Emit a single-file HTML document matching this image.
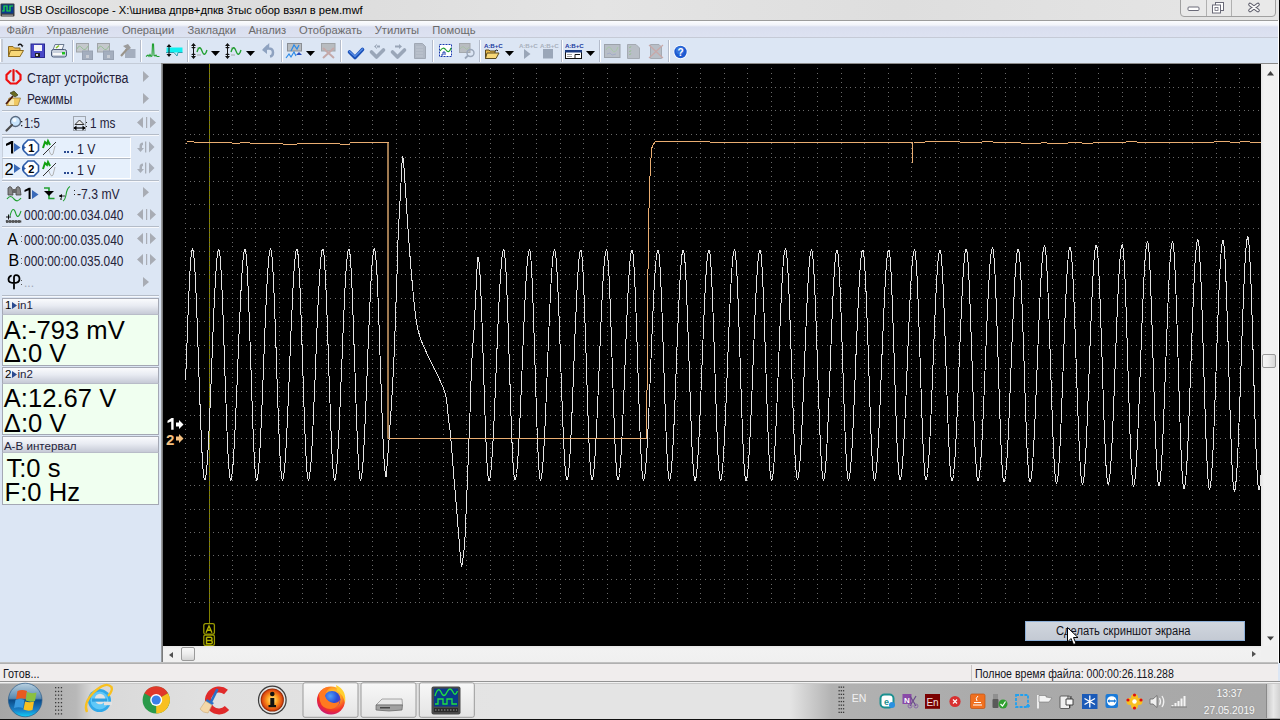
<!DOCTYPE html>
<html><head><meta charset="utf-8">
<style>
*{box-sizing:border-box}
body{margin:0;width:1280px;height:720px;overflow:hidden;position:relative;font-family:"Liberation Sans",sans-serif;background:#dce6f4;color:#000}
.a{position:absolute}
.t{position:absolute;white-space:pre;line-height:1}
svg{position:absolute;left:0;top:0;overflow:visible}
#grid line{stroke:#6a6a6a;stroke-width:1;stroke-dasharray:1 3.684;shape-rendering:crispEdges}
</style></head><body>
<div class="a" style="left:0px;top:0px;width:1280px;height:20px;background:linear-gradient(90deg,#e6e6e6,#dcdcdc 300px,#e4e4e4 600px,#dedede 900px,#e6e6e6);"></div>
<div class="a" style="left:0px;top:20px;width:1280px;height:1px;background:#9c9c9c;"></div>
<svg style="left:0px;top:3px;" width="15" height="15" viewBox="0 0 15 15"><rect x="0.5" y="0.5" width="14" height="13" rx="1" fill="#3a3a3a"/><rect x="1.5" y="1.5" width="12" height="9" fill="#0a3a8a"/><path d="M2,8 L4,8 L4,3 L7,3 L7,8 L10,8 L10,3 L13,3" fill="none" stroke="#20e040" stroke-width="1.2"/><rect x="2" y="11.5" width="11" height="1.5" fill="#888"/></svg>
<div class="t" style="left:19.4px;top:4.5px;font-size:11.2px;color:#000;">USB Oscilloscope - X:\шнива дпрв+дпкв 3тыс обор взял в рем.mwf</div>
<svg style="left:1180px;top:0px;" width="97" height="17" viewBox="0 0 97 17"><path d="M0.5,0 L0.5,13 Q0.5,16.5 4,16.5 L92,16.5 Q95.5,16.5 95.5,13 L95.5,0" fill="#e9e9e9" stroke="#a0a0a0"/><line x1="26.5" y1="0" x2="26.5" y2="16" stroke="#b0b0b0"/><line x1="51.5" y1="0" x2="51.5" y2="16" stroke="#b0b0b0"/><rect x="8" y="7" width="11" height="3.5" rx="1" fill="#fff" stroke="#6a6a78" stroke-width="1"/><rect x="35.5" y="2.5" width="8" height="8" fill="#fff" stroke="#6a6a78"/><rect x="32.5" y="5" width="8" height="8" fill="#fff" stroke="#6a6a78"/><rect x="35" y="7.5" width="3" height="3" fill="none" stroke="#6a6a78" stroke-width="0.8"/><path d="M70,4.5 L78,10.5 M78,4.5 L70,10.5" stroke="#5a5a68" stroke-width="3.6" stroke-linecap="round"/><path d="M70,4.5 L78,10.5 M78,4.5 L70,10.5" stroke="#f8f8f8" stroke-width="1.6" stroke-linecap="round"/></svg>
<div class="a" style="left:0px;top:21px;width:1278px;height:16px;background:linear-gradient(#fbfcfe 0px,#f2f4fa 4px,#d9deef 6px,#dde2f1 16px);"></div>
<div class="a" style="left:0px;top:37px;width:1278px;height:1px;background:#c5cad6;"></div>
<div class="t" style="left:6.6px;top:24.5px;font-size:11.2px;color:#6b6b6b;">Файл</div>
<div class="t" style="left:46.5px;top:24.5px;font-size:11.2px;color:#6b6b6b;">Управление</div>
<div class="t" style="left:121.9px;top:24.5px;font-size:11.2px;color:#6b6b6b;">Операции</div>
<div class="t" style="left:187.5px;top:24.5px;font-size:11.2px;color:#6b6b6b;">Закладки</div>
<div class="t" style="left:248.4px;top:24.5px;font-size:11.2px;color:#6b6b6b;">Анализ</div>
<div class="t" style="left:299.0px;top:24.5px;font-size:11.2px;color:#6b6b6b;">Отображать</div>
<div class="t" style="left:374.7px;top:24.5px;font-size:11.2px;color:#6b6b6b;">Утилиты</div>
<div class="t" style="left:432.3px;top:24.5px;font-size:11.2px;color:#6b6b6b;">Помощь</div>
<div class="a" style="left:0px;top:38px;width:1278px;height:26px;background:#dce6f4;"></div>
<div class="a" style="left:0px;top:39px;width:2px;height:23px;background:#c0c8d4;"></div>
<div class="a" style="left:72px;top:40px;width:1px;height:22px;background:#b4bccb;"></div>
<div class="a" style="left:73px;top:40px;width:1px;height:22px;background:#ffffff;"></div>
<div class="a" style="left:140px;top:40px;width:1px;height:22px;background:#b4bccb;"></div>
<div class="a" style="left:141px;top:40px;width:1px;height:22px;background:#ffffff;"></div>
<div class="a" style="left:187px;top:40px;width:1px;height:22px;background:#b4bccb;"></div>
<div class="a" style="left:188px;top:40px;width:1px;height:22px;background:#ffffff;"></div>
<div class="a" style="left:281px;top:40px;width:1px;height:22px;background:#b4bccb;"></div>
<div class="a" style="left:282px;top:40px;width:1px;height:22px;background:#ffffff;"></div>
<div class="a" style="left:340px;top:40px;width:1px;height:22px;background:#b4bccb;"></div>
<div class="a" style="left:341px;top:40px;width:1px;height:22px;background:#ffffff;"></div>
<div class="a" style="left:432px;top:40px;width:1px;height:22px;background:#b4bccb;"></div>
<div class="a" style="left:433px;top:40px;width:1px;height:22px;background:#ffffff;"></div>
<div class="a" style="left:479px;top:40px;width:1px;height:22px;background:#b4bccb;"></div>
<div class="a" style="left:480px;top:40px;width:1px;height:22px;background:#ffffff;"></div>
<div class="a" style="left:561px;top:40px;width:1px;height:22px;background:#b4bccb;"></div>
<div class="a" style="left:562px;top:40px;width:1px;height:22px;background:#ffffff;"></div>
<div class="a" style="left:599px;top:40px;width:1px;height:22px;background:#b4bccb;"></div>
<div class="a" style="left:600px;top:40px;width:1px;height:22px;background:#ffffff;"></div>
<div class="a" style="left:668px;top:40px;width:1px;height:22px;background:#b4bccb;"></div>
<div class="a" style="left:669px;top:40px;width:1px;height:22px;background:#ffffff;"></div>
<div class="a" style="left:0;top:39px;width:1px;height:23px;background:#fff"></div><div class="a" style="left:1px;top:39px;width:2px;height:23px;background:#c6ccd6"></div>
<svg style="left:8px;top:43px;" width="16" height="14" viewBox="0 0 16 14"><path d="M0.5,3.5 L5,3.5 L6.5,5 L12,5 L12,13.5 L0.5,13.5 Z" fill="#e8b848" stroke="#8a6a20"/><path d="M2.5,7.5 L15.5,7.5 L12,13.5 L0.5,13.5 Z" fill="#f8d878" stroke="#8a6a20"/><path d="M10,2.5 Q12,0 14,2.5" fill="none" stroke="#111" stroke-width="1.3"/><path d="M13,2 L15.5,2.5 L14,4.5Z" fill="#111"/></svg>
<svg style="left:31px;top:44px;" width="14" height="14" viewBox="0 0 14 14"><rect x="0" y="0" width="13.5" height="13.5" fill="#4848c8"/><rect x="0" y="0" width="13.5" height="13.5" fill="none" stroke="#2a2a90"/><rect x="3" y="1" width="8" height="6" fill="#f4f4f8"/><rect x="4" y="9" width="5" height="4" fill="#222"/><rect x="5" y="10" width="2" height="2" fill="#ddd"/></svg>
<svg style="left:51px;top:44px;" width="16" height="14" viewBox="0 0 16 14"><path d="M4,0.5 L13,0.5 L11,6 L2,6Z" fill="#f4f6f8" stroke="#6a7a90"/><path d="M5,4 L8,1.5" stroke="#80c020" stroke-width="1.5"/><rect x="0.5" y="5.5" width="15" height="7.5" rx="2" fill="#c8d0dc" stroke="#4a5a78"/><rect x="2" y="9" width="12" height="2" fill="#f8f8f8"/><rect x="11" y="8" width="3" height="2.5" fill="#20c020"/></svg>
<svg style="left:76px;top:43px;" width="17" height="17" viewBox="0 0 17 17"><rect x="0.5" y="0.5" width="12" height="8.5" fill="#c4c8cc" stroke="#a0a4a8"/><path d="M1,6 Q3,1 6,5 Q9,9 12,3" fill="none" stroke="#98c098"/><rect x="6.5" y="8" width="10" height="8.5" fill="#a4aebe" stroke="#98a2b2"/><rect x="10" y="12" width="3" height="3" fill="#c8ccd4"/></svg>
<svg style="left:97px;top:43px;" width="17" height="17" viewBox="0 0 17 17"><rect x="0.5" y="0.5" width="12" height="8.5" fill="#c4c8cc" stroke="#a0a4a8"/><path d="M1,6 Q3,1 6,5 Q9,9 12,3" fill="none" stroke="#98c098"/><rect x="6.5" y="8" width="10" height="8.5" fill="#a4aebe" stroke="#98a2b2"/><rect x="10" y="12" width="3" height="3" fill="#c8ccd4"/></svg>
<svg style="left:120px;top:44px;" width="16" height="14" viewBox="0 0 16 14"><rect x="5" y="5" width="10.5" height="9" fill="#a4aebe"/><path d="M1,12 L8,4" stroke="#9a948a" stroke-width="2"/><path d="M3,2 L8,0 L11,4 L8,6 Z" fill="#9c9c9c"/></svg>
<svg style="left:146px;top:44px;" width="14" height="13" viewBox="0 0 14 13"><path d="M0,12.5 L2,11 L3,12.5 L4,10.5 L5,12.5 L6,12 L6.5,0 L7.5,0 L8,11.5 L9,12 L10,11 L11,12.5 L13.5,12.5" fill="none" stroke="#20a030" stroke-width="1.1"/></svg>
<svg style="left:165px;top:44px;" width="18" height="13" viewBox="0 0 18 13"><rect x="1.5" y="3.5" width="16" height="5" fill="#10f0f0"/><path d="M1,8.5 L9,8.5 L12,12 L13,8.5 L17.5,8.5" fill="none" stroke="#30a0b0" stroke-width="1"/><path d="M4,0 L1.5,3 L6.5,3Z M4,13 L1.5,10 L6.5,10Z" fill="#111"/><rect x="3.5" y="2" width="1" height="9" fill="#111"/></svg>
<svg style="left:191px;top:43px;" width="17" height="16" viewBox="0 0 17 16"><path d="M2.5,0 L0,3 L5,3Z M2.5,16 L0,13 L5,13Z M2.5,6 L0,4 L5,4Z M2.5,10 L0,12 L5,12Z" fill="#111"/><rect x="2" y="2" width="1" height="12" fill="#111"/><path d="M6,5 L10,5 M6,12 L10,12" stroke="#999" stroke-width="0.8"/><path d="M6,9 Q8.5,1 11,8 Q13.5,15 16,7" fill="none" stroke="#20a030" stroke-width="1.3"/></svg>
<svg style="left:225px;top:43px;" width="17" height="16" viewBox="0 0 17 16"><path d="M2.5,0 L0,3 L5,3Z M2.5,16 L0,13 L5,13Z M2.5,6 L0,4 L5,4Z M2.5,10 L0,12 L5,12Z" fill="#111"/><rect x="2" y="2" width="1" height="12" fill="#111"/><path d="M6,5 L10,5 M6,12 L10,12" stroke="#999" stroke-width="0.8"/><path d="M6,9 Q8.5,1 11,8 Q13.5,15 16,7" fill="none" stroke="#20a030" stroke-width="1.3"/></svg>
<svg style="left:211px;top:51px;" width="9" height="5" viewBox="0 0 9 5"><path d="M0,0 L9,0 L4.5,5 Z" fill="#000"/></svg>
<svg style="left:246px;top:51px;" width="9" height="5" viewBox="0 0 9 5"><path d="M0,0 L9,0 L4.5,5 Z" fill="#000"/></svg>
<svg style="left:306px;top:51px;" width="9" height="5" viewBox="0 0 9 5"><path d="M0,0 L9,0 L4.5,5 Z" fill="#000"/></svg>
<svg style="left:504.5px;top:51px;" width="9" height="5" viewBox="0 0 9 5"><path d="M0,0 L9,0 L4.5,5 Z" fill="#000"/></svg>
<svg style="left:586px;top:51px;" width="9" height="5" viewBox="0 0 9 5"><path d="M0,0 L9,0 L4.5,5 Z" fill="#000"/></svg>
<svg style="left:262px;top:45px;" width="12" height="12" viewBox="0 0 12 12"><path d="M2,5 L6,1 L6,3.5 Q11,3 11,7.5 Q11,11 8,11.5" fill="none" stroke="#8ea2c0" stroke-width="2.5"/><path d="M0,5 L5,0 L5,9Z" fill="#8ea2c0"/></svg>
<svg style="left:286px;top:43px;" width="16" height="16" viewBox="0 0 16 16"><rect x="1.5" y="0.5" width="14" height="7.5" fill="#b8bcc0" stroke="#8a8e94"/><path d="M5,8 L8,2 L11,6 L13,2" fill="none" stroke="#2a8ae8" stroke-width="1.2"/><path d="M0,15 L3,11 L5,14 L8,9 L10,13" fill="none" stroke="#2a8ae8" stroke-width="1.2"/><path d="M10,12 L13,9 L16,12Z" fill="#2a50c0"/></svg>
<svg style="left:321px;top:43px;" width="15" height="16" viewBox="0 0 15 16"><rect x="0.5" y="0.5" width="13.5" height="7.5" fill="#b8bcc0" stroke="#a0a4a8"/><path d="M2,15 L13,5 M2,5 L13,15" stroke="#c4a8a8" stroke-width="2"/></svg>
<svg style="left:348px;top:47px;" width="16" height="12" viewBox="0 0 16 12"><path d="M1.5,5 L7,10.5 L14.5,2.5" fill="none" stroke="#1a50b8" stroke-width="3.6" stroke-linejoin="round" stroke-linecap="round"/><path d="M1.5,4.5 L7,9.5 L14.5,2" fill="none" stroke="#5a90e8" stroke-width="1.2" stroke-linecap="round"/></svg>
<svg style="left:370px;top:44px;" width="15" height="15" viewBox="0 0 15 15"><path d="M7,0 L4,2.5 L7,5 Z M6,1.5 L10,1.5 L10,3.5 L6,3.5Z" fill="#9aa6b8"/><path d="M1.5,8 L6.5,13 L13.5,6" fill="none" stroke="#9aa6b8" stroke-width="3.6" stroke-linejoin="round" stroke-linecap="round"/></svg>
<svg style="left:391px;top:44px;" width="15" height="15" viewBox="0 0 15 15"><path d="M8,0 L11,2.5 L8,5 Z M4,1.5 L9,1.5 L9,3.5 L4,3.5Z" fill="#9aa6b8"/><path d="M1.5,8 L6.5,13 L13.5,6" fill="none" stroke="#9aa6b8" stroke-width="3.6" stroke-linejoin="round" stroke-linecap="round"/></svg>
<svg style="left:414px;top:43px;" width="12" height="16" viewBox="0 0 12 16"><path d="M0.5,0.5 L8.5,0.5 L11.5,3.5 L11.5,15.5 L0.5,15.5Z" fill="#b0b8c4" stroke="#a0a8b4"/><path d="M2,4 L9,4 M2,7 L9,7 M2,10 L9,10 M2,13 L9,13" stroke="#c4cad4" stroke-width="0.8"/></svg>
<svg style="left:438px;top:43px;" width="15" height="15" viewBox="0 0 15 15"><rect x="1.5" y="1.5" width="12" height="12" fill="#fff" stroke="#1a3ab0" stroke-dasharray="2 1"/><path d="M2,8 Q5,3 8,7 Q11,11 13,5" fill="none" stroke="#20a030" stroke-width="1.2"/><path d="M3,12 L5,12 L5,9 L7,9 L7,12" fill="none" stroke="#1a3ab0" stroke-width="1"/></svg>
<svg style="left:459px;top:43px;" width="17" height="16" viewBox="0 0 17 16"><rect x="0.5" y="0.5" width="10.5" height="9" fill="#b8bcc0" stroke="#a4a8ac"/><path d="M1,6 Q4,2 6,5 Q8,8 10,4" fill="none" stroke="#a8c0a8"/><circle cx="11.5" cy="10" r="3.5" fill="none" stroke="#9aa6b8" stroke-width="1.4"/><path d="M9,12.5 L6,15.5" stroke="#9aa6b8" stroke-width="1.8"/></svg>
<div class="t" style="left:484px;top:42.5px;font-size:6.2px;font-weight:bold;color:#1a3aa0;letter-spacing:-0.1px">A:B+C</div>
<div class="t" style="left:519px;top:42.5px;font-size:6.2px;font-weight:bold;color:#a8b0bc;letter-spacing:-0.1px">A:B+C</div>
<div class="t" style="left:540px;top:42.5px;font-size:6.2px;font-weight:bold;color:#a8b0bc;letter-spacing:-0.1px">A:B+C</div>
<div class="t" style="left:565px;top:42.5px;font-size:6.2px;font-weight:bold;color:#1a3aa0;letter-spacing:-0.1px">A:B+C</div>
<svg style="left:485px;top:49px;" width="15" height="10" viewBox="0 0 15 10"><path d="M0.5,1 L4,1 L5,2 L10,2 L10,9.5 L0.5,9.5Z" fill="#e8b848" stroke="#5a4a20"/><path d="M2,4 L14,4 L11,9.5 L0.5,9.5Z" fill="#f8d878" stroke="#5a4a20"/><path d="M10,2 Q12,0 13,2" fill="none" stroke="#111"/></svg>
<svg style="left:524px;top:49px;" width="7" height="10" viewBox="0 0 7 10"><path d="M0,0 L6.5,5 L0,10Z" fill="#9aa6b8"/></svg>
<svg style="left:543px;top:49px;" width="10" height="10" viewBox="0 0 10 10"><rect width="10" height="9.5" fill="#9aa6b8"/></svg>
<svg style="left:565px;top:50px;" width="17" height="9" viewBox="0 0 17 9"><rect x="0.5" y="0.5" width="16" height="8" fill="#fff" stroke="#111"/><rect x="0" y="0" width="17" height="2.5" fill="#1a3a80"/><path d="M2,4.5 L7,4.5 M2,6.5 L7,6.5" stroke="#888" stroke-width="0.8"/><path d="M10,8 L10,4.5 L15,4.5" fill="none" stroke="#111"/></svg>
<svg style="left:604px;top:44px;" width="17" height="14" viewBox="0 0 17 14"><rect x="0.5" y="0.5" width="15.5" height="13" fill="#b8bec6" stroke="#9ca2aa"/><path d="M2,6 Q5,0 8,6 Q11,11 14,3" fill="none" stroke="#a8c8a8"/><path d="M3,10 L6,9 L8,11 L12,10" fill="none" stroke="#a0a8c8" stroke-width="0.8"/></svg>
<svg style="left:627px;top:44px;" width="13" height="15" viewBox="0 0 13 15"><path d="M0.5,0.5 L9,0.5 L12.5,4 L12.5,14.5 L0.5,14.5Z" fill="#b8bec6" stroke="#a4aab2"/><path d="M2,3 L3,4 L4,2 M2,7 L3,8 L4,6 M2,10 L3,11 L4,9" fill="none" stroke="#98c098" stroke-width="0.8"/></svg>
<svg style="left:648px;top:44px;" width="16" height="15" viewBox="0 0 16 15"><path d="M2.5,0.5 L11,0.5 L13.5,3 L13.5,14.5 L2.5,14.5Z" fill="#b8bec6" stroke="#a4aab2"/><path d="M1,1 L15,14 M15,1 L1,14" stroke="#c8a8a8" stroke-width="1.2"/></svg>
<svg style="left:673px;top:45px;" width="16" height="14" viewBox="0 0 16 14"><circle cx="7.5" cy="7" r="7" fill="#fff"/><circle cx="7.5" cy="7" r="6.2" fill="#1e5ad0"/><circle cx="7" cy="5.5" r="4" fill="#4a8ae8" opacity="0.5"/><text x="7.6" y="11" font-family="Liberation Sans" font-weight="bold" font-size="10" fill="#fff" text-anchor="middle">?</text></svg>
<div class="a" style="left:0px;top:64px;width:161px;height:598px;background:#dce6f4;"></div>
<div class="a" style="left:161px;top:64px;width:2px;height:598px;background:linear-gradient(90deg,#a8acb0,#6a6a6a);"></div>
<svg style="left:5px;top:69px;" width="17" height="16" viewBox="0 0 17 16"><path d="M5.5,2 L11.5,2 L15.5,6 L15.5,10.5 L11.5,14.5 L5.5,14.5 L1.5,10.5 L1.5,6 Z" fill="none" stroke="#f01010" stroke-width="2.2"/><rect x="6.5" y="0" width="4" height="4" fill="#dce6f4"/><path d="M8.5,1 L8.5,11.5" stroke="#e01010" stroke-width="2.2" stroke-linecap="round"/></svg>
<div class="t" style="left:27.0px;top:71.1px;font-size:14px;color:#24223a;transform:scaleX(0.8881);transform-origin:0 0;">Старт устройства</div>
<svg style="left:143px;top:71px;" width="6" height="11" viewBox="0 0 6 11"><path d="M0,0 L6,5.5 L0,11 Z" fill="#a8acb4"/></svg>
<svg style="left:5px;top:91px;" width="17" height="16" viewBox="0 0 17 16"><path d="M4,7 L15.5,7 L13,14.5 L1.5,14.5 Z" fill="#f0c860" stroke="#a08040" stroke-width="0.8"/><path d="M4,8 L9,8 L9,14 L4,14Z" fill="#f8e8b0"/><path d="M1,13 L8,5" stroke="#4a1a10" stroke-width="1.8"/><path d="M5,2 L9,0 L13,4 L10,6 Z" fill="#6a6a20" stroke="#2a2a10" stroke-width="0.6"/></svg>
<div class="t" style="left:27.0px;top:92.1px;font-size:14px;color:#24223a;transform:scaleX(0.8528);transform-origin:0 0;">Режимы</div>
<svg style="left:143px;top:93px;" width="6" height="11" viewBox="0 0 6 11"><path d="M0,0 L6,5.5 L0,11 Z" fill="#a8acb4"/></svg>
<div class="a" style="left:2px;top:110px;width:157px;height:1px;background:#b4bcc8;"></div><div class="a" style="left:2px;top:111px;width:157px;height:1px;background:#f6f8fc;"></div>
<svg style="left:5px;top:115px;" width="17" height="17" viewBox="0 0 17 17"><circle cx="10.5" cy="6.5" r="5" fill="#c8e4fc" stroke="#5a6a80" stroke-width="1.3"/><circle cx="9.5" cy="5" r="2" fill="#fff" opacity="0.8"/><path d="M7,10 L1.5,15.5" stroke="#4a4a4a" stroke-width="2.2" stroke-linecap="round"/><rect x="16" y="6" width="1.3" height="1.3" fill="#222"/><rect x="16" y="10" width="1.3" height="1.3" fill="#222"/></svg>
<div class="t" style="left:24.3px;top:115.9px;font-size:14px;color:#24223a;transform:scaleX(0.8167);transform-origin:0 0;">1:5</div>
<svg style="left:73px;top:116px;" width="13" height="15" viewBox="0 0 13 15"><rect x="0.5" y="0.5" width="12" height="14" fill="none" stroke="#333" stroke-width="0.7" stroke-dasharray="1 1"/><path d="M2,8.5 L6.5,4 L11,8.5 Z" fill="#e8e8e8" stroke="#333"/><path d="M1,12 L12,12" stroke="#000" stroke-width="1.2"/><path d="M0.5,12 L3.5,9.5 L3.5,14.5Z M12.5,12 L9.5,9.5 L9.5,14.5Z" fill="#000"/></svg>
<div class="a" style="left:86px;top:122px;width:1.4px;height:1.4px;background:#222;"></div>
<div class="a" style="left:86px;top:126px;width:1.4px;height:1.4px;background:#222;"></div>
<div class="t" style="left:90.0px;top:115.9px;font-size:14px;color:#24223a;transform:scaleX(0.8404);transform-origin:0 0;">1 ms</div>
<svg style="left:137px;top:117px;" width="19" height="11" viewBox="0 0 19 11"><path d="M6,0 L0,5.5 L6,11 Z M13,0 L19,5.5 L13,11 Z" fill="#a8acb4"/><rect x="9" y="0" width="1.2" height="11" fill="#a8acb4"/></svg>
<div class="a" style="left:2px;top:134px;width:157px;height:1px;background:#b4bcc8;"></div><div class="a" style="left:2px;top:135px;width:157px;height:1px;background:#f6f8fc;"></div>
<div class="a" style="left:2px;top:137px;width:129px;height:21px;background:#e6f0fc;border-top:1px solid #b0b8c4;border-left:1px solid #c8d0dc;border-right:1px solid #fff;border-bottom:1px solid #fff"></div>
<svg style="left:4px;top:140px;" width="10" height="14" viewBox="0 0 10 14"><path d="M2,3.8 L7.3,1 L9.2,1 L9.2,13.5 L7,13.5 L7,4 L2,6Z" fill="#000"/></svg>
<svg style="left:14px;top:143px;" width="7" height="9" viewBox="0 0 7 9"><path d="M0,0 L6.5,4.5 L0,9 Z" fill="#3a6ab8"/></svg>
<svg style="left:22px;top:139px;" width="18" height="17" viewBox="0 0 18 17"><path d="M6,1 L12,1 L16.5,5.5 L16.5,11.5 L12,16 L6,16 L1.5,11.5 L1.5,5.5 Z" fill="#fff" stroke="#2a5aa8" stroke-width="1.6"/><path d="M0,6 L4,8.5 L0,11Z" fill="#2a5aa8"/><text x="9.3" y="13" font-family="Liberation Sans" font-weight="bold" font-size="11" text-anchor="middle" fill="#000">1</text></svg>
<svg style="left:42px;top:140px;" width="15" height="16" viewBox="0 0 15 16"><path d="M1,8 L3,2 L5,4 L6,1 L8,5" fill="none" stroke="#10a010" stroke-width="2"/><path d="M1,15 L14,2" stroke="#333" stroke-width="1"/><path d="M7,10 Q9,17 11,14 L13,6" fill="none" stroke="#aaa" stroke-width="0.9"/></svg>
<div class="a" style="left:63.5px;top:151px;width:2px;height:2px;background:#2a4a90;"></div>
<div class="a" style="left:67.2px;top:151px;width:2px;height:2px;background:#2a4a90;"></div>
<div class="a" style="left:70.9px;top:151px;width:2px;height:2px;background:#2a4a90;"></div>
<div class="t" style="left:77.3px;top:140.6px;font-size:15px;color:#24223a;transform:scaleX(0.8172);transform-origin:0 0;">1 V</div>
<svg style="left:137px;top:141px;" width="19" height="12" viewBox="0 0 19 12"><path d="M6,1.5 Q2.5,1.5 2.5,5 L2.5,7 L0,7 L3.5,11 L7,7 L5,7 L5,5 Q5,4 6,4Z" fill="#a8aeb8"/><rect x="8" y="0.5" width="1.3" height="11" fill="#a8aeb8"/><path d="M12,0.5 L17.5,6 L12,11.5Z" fill="#a8aeb8"/></svg>
<div class="a" style="left:2px;top:158px;width:129px;height:21px;background:#e6f0fc;border-top:1px solid #b0b8c4;border-left:1px solid #c8d0dc;border-right:1px solid #fff;border-bottom:1px solid #fff"></div>
<div class="t" style="left:4.5px;top:160.9px;font-size:16.5px;color:#000;">2</div>
<svg style="left:14px;top:164px;" width="7" height="9" viewBox="0 0 7 9"><path d="M0,0 L6.5,4.5 L0,9 Z" fill="#3a6ab8"/></svg>
<svg style="left:22px;top:160px;" width="18" height="17" viewBox="0 0 18 17"><path d="M6,1 L12,1 L16.5,5.5 L16.5,11.5 L12,16 L6,16 L1.5,11.5 L1.5,5.5 Z" fill="#fff" stroke="#2a5aa8" stroke-width="1.6"/><path d="M0,6 L4,8.5 L0,11Z" fill="#2a5aa8"/><text x="9.3" y="13" font-family="Liberation Sans" font-weight="bold" font-size="11" text-anchor="middle" fill="#000">2</text></svg>
<svg style="left:42px;top:161px;" width="15" height="16" viewBox="0 0 15 16"><path d="M1,8 L3,2 L5,4 L6,1 L8,5" fill="none" stroke="#10a010" stroke-width="2"/><path d="M1,15 L14,2" stroke="#333" stroke-width="1"/><path d="M7,10 Q9,17 11,14 L13,6" fill="none" stroke="#aaa" stroke-width="0.9"/></svg>
<div class="a" style="left:63.5px;top:172px;width:2px;height:2px;background:#2a4a90;"></div>
<div class="a" style="left:67.2px;top:172px;width:2px;height:2px;background:#2a4a90;"></div>
<div class="a" style="left:70.9px;top:172px;width:2px;height:2px;background:#2a4a90;"></div>
<div class="t" style="left:77.3px;top:161.6px;font-size:15px;color:#24223a;transform:scaleX(0.8172);transform-origin:0 0;">1 V</div>
<svg style="left:137px;top:162px;" width="19" height="12" viewBox="0 0 19 12"><path d="M6,1.5 Q2.5,1.5 2.5,5 L2.5,7 L0,7 L3.5,11 L7,7 L5,7 L5,5 Q5,4 6,4Z" fill="#a8aeb8"/><rect x="8" y="0.5" width="1.3" height="11" fill="#a8aeb8"/><path d="M12,0.5 L17.5,6 L12,11.5Z" fill="#a8aeb8"/></svg>
<div class="a" style="left:2px;top:180px;width:157px;height:1px;background:#b4bcc8;"></div><div class="a" style="left:2px;top:181px;width:157px;height:1px;background:#f6f8fc;"></div>
<svg style="left:7px;top:185px;" width="15" height="17" viewBox="0 0 15 17"><path d="M1,3 Q3,0 5,3 L6,10 L1,10 Z M9,3 Q11,0 13,3 L14,10 L9,10 Z" fill="#888" stroke="#444" stroke-width="0.8"/><rect x="5.5" y="4" width="4" height="4" fill="#666"/><path d="M0,14 Q3.5,9 7,14 Q10.5,18 14,13" fill="none" stroke="#20a030" stroke-width="1.2"/></svg>
<svg style="left:23px;top:187px;" width="9" height="13" viewBox="0 0 9 13"><path d="M1.5,3 L5.8,0.8 L7.6,0.8 L7.6,12 L5.6,12 L5.6,3.3 L1.5,5Z" fill="#000"/></svg>
<svg style="left:32px;top:190px;" width="7" height="9" viewBox="0 0 7 9"><path d="M0,0 L6.5,4.5 L0,9 Z" fill="#3a6ab8"/></svg>
<svg style="left:44px;top:187px;" width="11" height="13" viewBox="0 0 11 13"><path d="M0,1 L5,1 L5,11.5 L10.5,11.5" fill="none" stroke="#20a030" stroke-width="1.6"/><path d="M0,4 L10,4 L5,9Z" fill="#000"/></svg>
<svg style="left:59px;top:186px;" width="15" height="16" viewBox="0 0 15 16"><path d="M4,15 Q6,14 7,9 Q8,2 11,0.5" fill="none" stroke="#20a030" stroke-width="1.1"/><path d="M0,10 L6,10" stroke="#000" stroke-width="0.8"/><path d="M0,10 L3,8 L3,12Z" fill="#000"/><rect x="1.5" y="12" width="1" height="2" fill="#000"/></svg>
<div class="a" style="left:73.5px;top:190px;width:1.3px;height:1.3px;background:#222;"></div>
<div class="a" style="left:73.5px;top:194px;width:1.3px;height:1.3px;background:#222;"></div>
<div class="t" style="left:77.0px;top:187.0px;font-size:14px;color:#24223a;transform:scaleX(0.8712);transform-origin:0 0;">-7.3 mV</div>
<svg style="left:143px;top:187.2px;" width="6" height="10.5" viewBox="0 0 6 10.5"><path d="M0,0 L6,5.25 L0,10.5 Z" fill="#a8acb4"/></svg>
<svg style="left:5px;top:207px;" width="17" height="16" viewBox="0 0 17 16"><path d="M5,9 Q8,-3 11,7 Q13,13 16,4" fill="none" stroke="#20a030" stroke-width="1.1"/><path d="M1,10 L6,10 M3.5,7.5 L3.5,12.5" stroke="#000" stroke-width="0.9"/><rect x="1" y="13.5" width="15" height="2" fill="#555" stroke="#222" stroke-width="0.5" stroke-dasharray="2 1"/></svg>
<div class="t" style="left:23.6px;top:208.4px;font-size:14px;color:#24223a;transform:scaleX(0.8520);transform-origin:0 0;">000:00:00.034.040</div>
<svg style="left:137px;top:208.5px;" width="19" height="11" viewBox="0 0 19 11"><path d="M6,0 L0,5.5 L6,11 Z M13,0 L19,5.5 L13,11 Z" fill="#a8acb4"/><rect x="9" y="0" width="1.2" height="11" fill="#a8acb4"/></svg>
<div class="a" style="left:2px;top:226px;width:157px;height:1px;background:#b4bcc8;"></div><div class="a" style="left:2px;top:227px;width:157px;height:1px;background:#f6f8fc;"></div>
<div class="t" style="left:7.3px;top:231.5px;font-size:16px;color:#000;">A</div>
<div class="a" style="left:20.5px;top:236px;width:1.3px;height:1.3px;background:#555;"></div>
<div class="a" style="left:20.5px;top:241px;width:1.3px;height:1.3px;background:#555;"></div>
<div class="t" style="left:23.6px;top:233.2px;font-size:14px;color:#24223a;transform:scaleX(0.8520);transform-origin:0 0;">000:00:00.035.040</div>
<svg style="left:137px;top:233px;" width="19" height="11" viewBox="0 0 19 11"><path d="M6,0 L0,5.5 L6,11 Z M13,0 L19,5.5 L13,11 Z" fill="#a8acb4"/><rect x="9" y="0" width="1.2" height="11" fill="#a8acb4"/></svg>
<div class="t" style="left:8.5px;top:253.2px;font-size:16px;color:#000;">B</div>
<div class="a" style="left:20.5px;top:257.5px;width:1.3px;height:1.3px;background:#555;"></div>
<div class="a" style="left:20.5px;top:262.5px;width:1.3px;height:1.3px;background:#555;"></div>
<div class="t" style="left:23.6px;top:253.9px;font-size:14px;color:#24223a;transform:scaleX(0.8520);transform-origin:0 0;">000:00:00.035.040</div>
<svg style="left:137px;top:254.3px;" width="19" height="11" viewBox="0 0 19 11"><path d="M6,0 L0,5.5 L6,11 Z M13,0 L19,5.5 L13,11 Z" fill="#a8acb4"/><rect x="9" y="0" width="1.2" height="11" fill="#a8acb4"/></svg>
<svg style="left:7px;top:274px;" width="14" height="16" viewBox="0 0 14 16"><path d="M4,1.8 Q1.5,3 1.5,5.5 Q1.5,9 7,9 Q12.5,9 12.5,5 Q12.5,1.2 9,1.2 Q7,1.2 7,3.5 L7,14.5" fill="none" stroke="#000" stroke-width="1.8" stroke-linecap="round"/></svg>
<div class="a" style="left:20.5px;top:279.5px;width:1.3px;height:1.3px;background:#555;"></div>
<div class="a" style="left:20.5px;top:283.5px;width:1.3px;height:1.3px;background:#555;"></div>
<div class="t" style="left:24.0px;top:277.2px;font-size:12px;color:#a0a8b8;">...</div>
<svg style="left:143px;top:276.8px;" width="6" height="10" viewBox="0 0 6 10"><path d="M0,0 L6,5.0 L0,10 Z" fill="#a8acb4"/></svg>
<div class="a" style="left:2px;top:295px;width:157px;height:1px;background:#b4bcc8;"></div><div class="a" style="left:2px;top:296px;width:157px;height:1px;background:#f6f8fc;"></div>
<div class="a" style="left:2px;top:298px;width:157px;height:16px;background:linear-gradient(#fafbfd,#e8ebf2 45%,#c6cad6);border:1px solid #a4a8b4;border-bottom:none"></div>
<div class="t" style="left:5.0px;top:300.3px;font-size:11.5px;color:#000;">1</div>
<svg style="left:12px;top:301.8px;" width="5" height="7" viewBox="0 0 5 7"><path d="M0,0 L5,3.5 L0,7Z" fill="#2a4a90"/></svg>
<div class="t" style="left:17.5px;top:300.3px;font-size:11.5px;color:#24223a;">in1</div>
<div class="a" style="left:2px;top:314px;width:157px;height:52px;background:#f0fff0;border:1px solid #a4a8b4;border-top:1px solid #b8bcc8"></div>
<div class="t" style="left:3.8px;top:317.7px;font-size:25.6px;color:#000;">A:-793 mV</div>
<div class="t" style="left:3.8px;top:341.1px;font-size:25.6px;color:#000;">Δ:0 V</div>
<div class="a" style="left:2px;top:367px;width:157px;height:16px;background:linear-gradient(#fafbfd,#e8ebf2 45%,#c6cad6);border:1px solid #a4a8b4;border-bottom:none"></div>
<div class="t" style="left:5.0px;top:369.3px;font-size:11.5px;color:#000;">2</div>
<svg style="left:12px;top:370.8px;" width="5" height="7" viewBox="0 0 5 7"><path d="M0,0 L5,3.5 L0,7Z" fill="#2a4a90"/></svg>
<div class="t" style="left:17.5px;top:369.3px;font-size:11.5px;color:#24223a;">in2</div>
<div class="a" style="left:2px;top:383px;width:157px;height:52px;background:#f0fff0;border:1px solid #a4a8b4;border-top:1px solid #b8bcc8"></div>
<div class="t" style="left:3.8px;top:386.2px;font-size:25.6px;color:#000;">A:12.67 V</div>
<div class="t" style="left:3.8px;top:411.2px;font-size:25.6px;color:#000;">Δ:0 V</div>
<div class="a" style="left:2px;top:436px;width:157px;height:16px;background:linear-gradient(#fafbfd,#e8ebf2 45%,#c6cad6);border:1px solid #a4a8b4;border-bottom:none"></div>
<div class="t" style="left:3.9px;top:439.8px;font-size:11.6px;color:#24223a;">A-B интервал</div>
<div class="a" style="left:2px;top:452px;width:157px;height:53px;background:#f0fff0;border:1px solid #a4a8b4;border-top:1px solid #b8bcc8"></div>
<div class="t" style="left:6.4px;top:455.7px;font-size:25.6px;color:#000;">T:0 s</div>
<div class="t" style="left:4.6px;top:480.2px;font-size:25.6px;color:#000;">F:0 Hz</div>
<div class="a" style="left:163px;top:64px;width:1098px;height:582px;background:#000;"></div>
<div class="a" style="left:161px;top:63px;width:1117px;height:1px;background:#8a8a8a;"></div>
<div class="a" style="left:0px;top:63px;width:161px;height:1px;background:#c4ccd8;"></div>
<svg width="1280" height="720" viewBox="0 0 1280 720">
<defs><clipPath id="sc"><rect x="163" y="64" width="1098" height="582"/></clipPath></defs>
<g clip-path="url(#sc)">
<line x1="209.5" y1="64" x2="209.5" y2="623.5" stroke="#808000" stroke-width="1"/>
<g id="grid"><line x1="185.50" y1="68.26" x2="185.50" y2="603.74"/><line x1="209.50" y1="68.26" x2="209.50" y2="603.74"/><line x1="232.50" y1="68.26" x2="232.50" y2="603.74"/><line x1="255.50" y1="68.26" x2="255.50" y2="603.74"/><line x1="279.50" y1="68.26" x2="279.50" y2="603.74"/><line x1="302.50" y1="68.26" x2="302.50" y2="603.74"/><line x1="326.50" y1="68.26" x2="326.50" y2="603.74"/><line x1="349.50" y1="68.26" x2="349.50" y2="603.74"/><line x1="372.50" y1="68.26" x2="372.50" y2="603.74"/><line x1="396.50" y1="68.26" x2="396.50" y2="603.74"/><line x1="419.50" y1="68.26" x2="419.50" y2="603.74"/><line x1="443.50" y1="68.26" x2="443.50" y2="603.74"/><line x1="466.50" y1="68.26" x2="466.50" y2="603.74"/><line x1="490.50" y1="68.26" x2="490.50" y2="603.74"/><line x1="513.50" y1="68.26" x2="513.50" y2="603.74"/><line x1="536.50" y1="68.26" x2="536.50" y2="603.74"/><line x1="560.50" y1="68.26" x2="560.50" y2="603.74"/><line x1="583.50" y1="68.26" x2="583.50" y2="603.74"/><line x1="607.50" y1="68.26" x2="607.50" y2="603.74"/><line x1="630.50" y1="68.26" x2="630.50" y2="603.74"/><line x1="654.50" y1="68.26" x2="654.50" y2="603.74"/><line x1="677.50" y1="68.26" x2="677.50" y2="603.74"/><line x1="700.50" y1="68.26" x2="700.50" y2="603.74"/><line x1="724.50" y1="68.26" x2="724.50" y2="603.74"/><line x1="747.50" y1="68.26" x2="747.50" y2="603.74"/><line x1="771.50" y1="68.26" x2="771.50" y2="603.74"/><line x1="794.50" y1="68.26" x2="794.50" y2="603.74"/><line x1="817.50" y1="68.26" x2="817.50" y2="603.74"/><line x1="841.50" y1="68.26" x2="841.50" y2="603.74"/><line x1="864.50" y1="68.26" x2="864.50" y2="603.74"/><line x1="888.50" y1="68.26" x2="888.50" y2="603.74"/><line x1="911.50" y1="68.26" x2="911.50" y2="603.74"/><line x1="935.50" y1="68.26" x2="935.50" y2="603.74"/><line x1="958.50" y1="68.26" x2="958.50" y2="603.74"/><line x1="981.50" y1="68.26" x2="981.50" y2="603.74"/><line x1="1005.50" y1="68.26" x2="1005.50" y2="603.74"/><line x1="1028.50" y1="68.26" x2="1028.50" y2="603.74"/><line x1="1052.50" y1="68.26" x2="1052.50" y2="603.74"/><line x1="1075.50" y1="68.26" x2="1075.50" y2="603.74"/><line x1="1098.50" y1="68.26" x2="1098.50" y2="603.74"/><line x1="1122.50" y1="68.26" x2="1122.50" y2="603.74"/><line x1="1145.50" y1="68.26" x2="1145.50" y2="603.74"/><line x1="1169.50" y1="68.26" x2="1169.50" y2="603.74"/><line x1="1192.50" y1="68.26" x2="1192.50" y2="603.74"/><line x1="1216.50" y1="68.26" x2="1216.50" y2="603.74"/><line x1="1239.50" y1="68.26" x2="1239.50" y2="603.74"/><line x1="185.10" y1="87.50" x2="1261" y2="87.50"/><line x1="185.10" y1="110.50" x2="1261" y2="110.50"/><line x1="185.10" y1="134.50" x2="1261" y2="134.50"/><line x1="185.10" y1="157.50" x2="1261" y2="157.50"/><line x1="185.10" y1="181.50" x2="1261" y2="181.50"/><line x1="185.10" y1="204.50" x2="1261" y2="204.50"/><line x1="185.10" y1="228.50" x2="1261" y2="228.50"/><line x1="185.10" y1="251.50" x2="1261" y2="251.50"/><line x1="185.10" y1="274.50" x2="1261" y2="274.50"/><line x1="185.10" y1="298.50" x2="1261" y2="298.50"/><line x1="185.10" y1="321.50" x2="1261" y2="321.50"/><line x1="185.10" y1="345.50" x2="1261" y2="345.50"/><line x1="185.10" y1="368.50" x2="1261" y2="368.50"/><line x1="185.10" y1="391.50" x2="1261" y2="391.50"/><line x1="185.10" y1="415.50" x2="1261" y2="415.50"/><line x1="185.10" y1="438.50" x2="1261" y2="438.50"/><line x1="185.10" y1="462.50" x2="1261" y2="462.50"/><line x1="185.10" y1="485.50" x2="1261" y2="485.50"/><line x1="185.10" y1="509.50" x2="1261" y2="509.50"/><line x1="185.10" y1="532.50" x2="1261" y2="532.50"/><line x1="185.10" y1="555.50" x2="1261" y2="555.50"/><line x1="185.10" y1="579.50" x2="1261" y2="579.50"/><line x1="185.10" y1="602.50" x2="1261" y2="602.50"/></g>
<path d="M185.6,380.0 185.9,371.9 186.5,357.5 187.0,343.1 187.5,329.1 188.0,315.6 188.5,302.9 189.0,291.2 189.5,280.6 190.0,271.4 190.5,263.7 191.0,257.5 191.5,253.0 192.0,250.3 192.5,249.4 193.0,250.4 193.5,253.3 194.0,258.2 194.5,264.8 195.1,273.2 195.6,283.2 196.1,294.5 196.6,307.0 197.1,320.6 197.6,334.9 198.1,349.7 198.6,364.7 199.1,379.7 199.6,394.5 200.2,408.8 200.7,422.3 201.2,434.9 201.7,446.2 202.2,456.2 202.7,464.6 203.2,471.2 203.7,476.1 204.2,479.0 204.8,480.0 205.2,479.3 205.8,477.1 206.2,473.5 206.8,468.6 207.2,462.3 207.8,454.8 208.2,446.2 208.8,436.6 209.2,426.0 209.8,414.7 210.2,402.8 210.8,390.4 211.2,377.6 211.8,364.7 212.2,351.8 212.8,339.0 213.2,326.6 213.8,314.7 214.2,303.4 214.8,292.8 215.2,283.2 215.8,274.6 216.2,267.1 216.8,260.8 217.2,255.9 217.8,252.3 218.2,250.1 218.8,249.4 219.3,250.5 219.8,253.7 220.3,258.9 220.8,266.2 221.3,275.3 221.8,286.0 222.4,298.2 222.9,311.7 223.4,326.1 223.9,341.2 224.4,356.8 224.9,372.6 225.4,388.2 226.0,403.3 226.5,417.7 227.0,431.2 227.5,443.4 228.0,454.1 228.5,463.2 229.1,470.5 229.6,475.7 230.1,478.9 230.6,480.0 231.1,479.3 231.6,477.1 232.1,473.5 232.7,468.6 233.2,462.3 233.7,454.8 234.2,446.2 234.7,436.6 235.2,426.0 235.7,414.7 236.3,402.8 236.8,390.4 237.3,377.6 237.8,364.7 238.3,351.8 238.8,339.0 239.3,326.6 239.9,314.7 240.4,303.4 240.9,292.8 241.4,283.2 241.9,274.6 242.4,267.1 242.9,260.8 243.5,255.9 244.0,252.3 244.5,250.1 245.0,249.4 245.5,250.5 246.0,253.7 246.5,258.9 247.0,266.2 247.5,275.3 248.0,286.0 248.5,298.2 249.0,311.7 249.5,326.1 250.0,341.2 250.5,356.8 251.1,372.6 251.6,388.2 252.1,403.3 252.6,417.7 253.1,431.2 253.6,443.4 254.1,454.1 254.6,463.2 255.1,470.5 255.6,475.7 256.1,478.9 256.6,480.0 257.1,479.3 257.6,477.1 258.1,473.5 258.6,468.6 259.1,462.3 259.6,454.8 260.1,446.2 260.6,436.5 261.1,425.9 261.6,414.6 262.1,402.6 262.6,390.2 263.1,377.4 263.6,364.5 264.1,351.6 264.6,338.8 265.1,326.4 265.6,314.4 266.1,303.1 266.6,292.5 267.1,282.8 267.6,274.2 268.1,266.7 268.6,260.4 269.1,255.5 269.6,251.9 270.1,249.7 270.6,249.0 271.1,250.1 271.6,253.3 272.2,258.6 272.7,265.8 273.2,274.9 273.7,285.7 274.2,297.9 274.7,311.4 275.3,325.8 275.8,341.0 276.3,356.6 276.8,372.4 277.3,388.0 277.8,403.2 278.4,417.6 278.9,431.1 279.4,443.3 279.9,454.1 280.4,463.2 280.9,470.4 281.5,475.7 282.0,478.9 282.5,480.0 283.0,479.3 283.5,477.1 284.0,473.5 284.6,468.6 285.1,462.3 285.6,454.8 286.1,446.2 286.6,436.5 287.1,425.9 287.6,414.6 288.2,402.6 288.7,390.2 289.2,377.4 289.7,364.5 290.2,351.6 290.7,338.8 291.2,326.4 291.8,314.4 292.3,303.1 292.8,292.5 293.3,282.8 293.8,274.2 294.3,266.7 294.8,260.4 295.4,255.5 295.9,251.9 296.4,249.7 296.9,249.0 297.4,250.1 297.9,253.3 298.4,258.6 298.9,265.8 299.4,274.9 299.9,285.7 300.4,297.9 300.9,311.4 301.4,325.8 301.9,341.0 302.4,356.6 302.9,372.4 303.4,388.0 303.9,403.2 304.4,417.6 304.9,431.1 305.4,443.3 305.9,454.1 306.4,463.2 306.9,470.4 307.4,475.7 307.9,478.9 308.4,480.0 308.9,479.3 309.4,477.1 309.9,473.5 310.4,468.6 311.0,462.3 311.5,454.8 312.0,446.2 312.5,436.5 313.0,425.9 313.5,414.6 314.0,402.6 314.6,390.2 315.1,377.4 315.6,364.5 316.1,351.6 316.6,338.8 317.1,326.4 317.6,314.4 318.1,303.1 318.6,292.5 319.2,282.8 319.7,274.2 320.2,266.7 320.7,260.4 321.2,255.5 321.7,251.9 322.2,249.7 322.8,249.0 323.3,250.1 323.8,253.3 324.3,258.6 324.8,265.8 325.3,274.9 325.8,285.7 326.4,297.9 326.9,311.4 327.4,325.8 327.9,341.0 328.4,356.6 328.9,372.4 329.4,388.0 330.0,403.2 330.5,417.6 331.0,431.1 331.5,443.3 332.0,454.1 332.5,463.2 333.1,470.4 333.6,475.7 334.1,478.9 334.6,480.0 335.1,479.3 335.6,477.1 336.1,473.5 336.6,468.6 337.2,462.3 337.7,454.8 338.2,446.2 338.7,436.5 339.2,425.9 339.7,414.6 340.2,402.6 340.7,390.2 341.2,377.4 341.8,364.5 342.3,351.6 342.8,338.8 343.3,326.4 343.8,314.4 344.3,303.1 344.8,292.5 345.3,282.8 345.8,274.2 346.3,266.7 346.9,260.4 347.4,255.5 347.9,251.9 348.4,249.7 348.9,249.0 349.4,250.1 349.9,253.3 350.4,258.6 350.9,265.8 351.4,274.9 351.9,285.7 352.4,297.9 352.9,311.4 353.4,325.8 353.9,341.0 354.4,356.6 355.0,372.4 355.5,388.0 356.0,403.2 356.5,417.6 357.0,431.1 357.5,443.3 358.0,454.1 358.5,463.2 359.0,470.4 359.5,475.7 360.0,478.9 360.5,480.0 361.0,479.2 361.5,476.9 362.0,473.0 362.6,467.7 363.1,461.0 363.6,453.0 364.1,443.8 364.6,433.5 365.1,422.2 365.6,410.2 366.2,397.6 366.7,384.6 367.2,371.2 367.7,357.8 368.2,344.4 368.7,331.4 369.3,318.8 369.8,306.8 370.3,295.5 370.8,285.2 371.3,276.0 371.8,268.0 372.3,261.3 372.9,256.0 373.4,252.1 373.9,249.8 374.4,249.0 374.9,250.1 375.4,253.2 375.9,258.4 376.5,265.6 377.0,274.6 377.5,285.2 378.0,297.3 378.5,310.6 379.0,324.8 379.5,339.8 380.0,355.2 380.6,370.8 381.1,386.2 381.6,401.2 382.1,415.4 382.6,428.7 383.1,440.8 383.6,451.4 384.1,460.4 384.7,467.6 385.2,472.8 385.7,475.9 386.2,477.0 386.9,467.9 387.9,454.7 389.0,440.0 390.1,423.9 391.3,406.4 392.3,390.0 393.0,376.9 393.7,365.0 394.3,350.0 395.1,329.0 395.9,305.1 396.7,283.0 397.3,265.1 397.7,249.0 398.3,233.0 399.2,215.4 400.2,197.7 401.0,183.0 401.5,172.1 401.9,164.0 402.3,159.0 402.7,157.3 403.1,158.7 403.5,162.0 403.9,166.6 404.4,173.2 405.0,183.0 406.0,197.7 407.1,215.7 408.3,233.0 409.4,248.3 410.5,262.9 411.7,277.0 413.0,291.4 414.3,305.3 415.7,317.0 417.0,325.3 418.4,331.4 420.0,337.0 422.0,342.6 424.3,347.7 426.7,353.0 429.3,358.6 432.2,364.2 435.0,370.0 438.0,376.1 440.9,382.4 443.3,388.0 444.8,392.1 445.7,395.6 446.5,400.0 447.3,406.2 447.9,413.3 448.6,420.0 449.3,425.3 450.0,430.3 450.7,437.0 451.5,446.6 452.4,457.9 453.3,470.0 454.4,483.1 455.6,496.9 456.7,510.0 457.6,521.9 458.5,533.0 459.3,543.0 460.1,552.7 460.8,561.2 461.5,566.0 462.1,565.1 462.7,560.4 463.3,555.0 463.8,551.2 464.4,546.7 465.0,537.0 465.8,518.9 466.8,495.7 467.7,473.0 468.5,452.3 469.3,432.1 470.0,413.0 470.6,395.0 471.1,378.0 471.7,363.0 472.4,351.0 473.2,340.9 474.0,330.0 474.7,316.6 475.4,302.5 476.0,290.0 476.5,279.9 476.9,271.5 477.2,265.0 477.5,260.8 477.8,258.4 478.0,257.0 478.5,258.1 479.0,261.5 479.5,267.1 480.0,274.7 480.5,284.3 481.0,295.6 481.5,308.4 482.0,322.4 482.5,337.3 483.0,352.9 483.5,368.8 484.0,384.7 484.5,400.3 485.0,415.2 485.5,429.2 486.0,442.0 486.5,453.3 487.0,462.9 487.5,470.5 488.0,476.1 488.5,479.5 489.0,480.6 489.5,479.9 490.0,477.9 490.5,474.6 491.0,469.9 491.5,464.1 492.0,457.1 492.5,449.0 493.1,439.9 493.6,429.9 494.1,419.2 494.6,407.9 495.1,396.0 495.6,383.8 496.1,371.4 496.6,358.9 497.1,346.5 497.6,334.3 498.1,322.4 498.6,311.1 499.1,300.4 499.6,290.4 500.2,281.3 500.7,273.2 501.2,266.2 501.7,260.4 502.2,255.7 502.7,252.4 503.2,250.4 503.7,249.7 504.2,250.9 504.7,254.4 505.2,260.1 505.8,267.9 506.3,277.8 506.8,289.4 507.3,302.5 507.8,316.9 508.3,332.2 508.8,348.2 509.4,364.6 509.9,381.0 510.4,397.0 510.9,412.3 511.4,426.7 511.9,439.8 512.4,451.4 512.9,461.3 513.5,469.1 514.0,474.8 514.5,478.3 515.0,479.5 515.5,478.8 516.0,476.8 516.5,473.5 517.0,468.9 517.5,463.1 518.0,456.1 518.5,448.1 519.0,439.0 519.5,429.1 520.0,418.5 520.5,407.2 521.0,395.4 521.5,383.3 522.0,371.0 522.5,358.5 523.0,346.2 523.5,334.1 524.0,322.3 524.5,311.0 525.0,300.4 525.5,290.5 526.0,281.4 526.5,273.4 527.0,266.4 527.5,260.6 528.0,256.0 528.5,252.7 529.0,250.7 529.5,250.0 530.0,251.2 530.5,254.7 531.0,260.4 531.5,268.3 532.0,278.1 532.5,289.7 533.0,302.8 533.5,317.2 534.0,332.6 534.5,348.6 535.0,365.0 535.5,381.4 536.0,397.4 536.5,412.8 537.0,427.2 537.5,440.3 538.0,451.9 538.5,461.7 539.0,469.6 539.5,475.3 540.0,478.8 540.5,480.0 541.0,479.3 541.5,477.1 542.0,473.5 542.5,468.6 543.0,462.4 543.5,454.9 544.0,446.3 544.5,436.7 545.0,426.2 545.5,414.9 546.0,403.0 546.5,390.6 547.0,377.9 547.5,365.0 548.0,352.1 548.5,339.4 549.0,327.0 549.5,315.1 550.0,303.8 550.5,293.3 551.0,283.7 551.5,275.1 552.0,267.6 552.5,261.4 553.0,256.5 553.5,252.9 554.0,250.7 554.5,250.0 555.0,250.9 555.5,253.6 556.0,258.1 556.5,264.2 557.0,272.0 557.5,281.2 558.0,291.7 558.5,303.4 559.0,316.0 559.5,329.5 560.0,343.5 560.5,357.8 561.0,372.2 561.5,386.5 562.0,400.5 562.5,414.0 563.0,426.6 563.5,438.3 564.0,448.8 564.5,458.0 565.0,465.8 565.5,471.9 566.0,476.4 566.5,479.1 567.0,480.0 567.5,479.2 568.0,476.9 568.5,473.1 569.0,467.8 569.5,461.1 570.1,453.1 570.6,443.9 571.1,433.7 571.6,422.5 572.1,410.5 572.6,398.0 573.1,385.0 573.6,371.7 574.1,358.3 574.6,345.0 575.1,332.0 575.7,319.5 576.2,307.5 576.7,296.3 577.2,286.1 577.7,276.9 578.2,268.9 578.7,262.2 579.2,256.9 579.7,253.1 580.2,250.8 580.8,250.0 581.3,251.2 581.8,254.7 582.3,260.4 582.8,268.3 583.3,278.1 583.8,289.7 584.3,302.8 584.8,317.2 585.4,332.6 585.9,348.6 586.4,365.0 586.9,381.4 587.4,397.4 587.9,412.8 588.4,427.2 588.9,440.3 589.4,451.9 590.0,461.7 590.5,469.6 591.0,475.3 591.5,478.8 592.0,480.0 592.5,479.3 593.0,477.3 593.5,474.0 594.0,469.4 594.5,463.5 595.0,456.6 595.5,448.5 596.0,439.4 596.5,429.5 597.0,418.9 597.5,407.6 598.0,395.8 598.5,383.6 599.0,371.2 599.5,358.8 600.0,346.4 600.5,334.2 601.0,322.4 601.5,311.1 602.0,300.5 602.5,290.6 603.0,281.5 603.5,273.4 604.0,266.5 604.5,260.6 605.0,256.0 605.5,252.7 606.0,250.7 606.5,250.0 607.0,251.1 607.5,254.3 608.0,259.5 608.5,266.7 609.0,275.8 609.5,286.5 610.0,298.7 610.5,312.1 611.0,326.5 611.5,341.6 612.0,357.2 612.5,372.8 613.0,388.4 613.5,403.5 614.0,417.9 614.5,431.3 615.0,443.5 615.5,454.2 616.0,463.3 616.5,470.5 617.0,475.7 617.5,478.9 618.0,480.0 618.5,479.3 619.0,477.1 619.5,473.5 620.0,468.6 620.5,462.4 621.0,454.9 621.5,446.3 622.0,436.7 622.5,426.2 623.0,414.9 623.5,403.0 624.0,390.6 624.5,377.9 625.0,365.0 625.5,352.1 626.0,339.4 626.5,327.0 627.0,315.1 627.5,303.8 628.0,293.3 628.5,283.7 629.0,275.1 629.5,267.6 630.0,261.4 630.5,256.5 631.0,252.9 631.5,250.7 632.0,250.0 632.5,251.1 633.0,254.3 633.5,259.5 634.0,266.7 634.5,275.8 635.0,286.5 635.5,298.7 636.0,312.1 636.5,326.5 637.0,341.6 637.5,357.2 638.0,372.8 638.5,388.4 639.0,403.5 639.5,417.9 640.0,431.3 640.5,443.5 641.0,454.2 641.5,463.3 642.0,470.5 642.5,475.7 643.0,478.9 643.5,480.0 644.0,479.3 644.5,477.3 645.0,474.0 645.5,469.4 646.0,463.5 646.5,456.6 647.0,448.5 647.5,439.4 648.0,429.5 648.5,418.9 649.0,407.6 649.5,395.8 650.0,383.6 650.5,371.2 651.0,358.8 651.5,346.4 652.0,334.2 652.5,322.4 653.0,311.1 653.5,300.5 654.0,290.6 654.5,281.5 655.0,273.4 655.5,266.5 656.0,260.6 656.5,256.0 657.0,252.7 657.5,250.7 658.0,250.0 658.5,251.1 659.0,254.3 659.5,259.5 660.0,266.7 660.5,275.8 661.0,286.5 661.5,298.7 662.0,312.1 662.5,326.5 663.0,341.6 663.5,357.2 664.0,372.8 664.5,388.4 665.0,403.5 665.5,417.9 666.0,431.3 666.5,443.5 667.0,454.2 667.5,463.3 668.0,470.5 668.5,475.7 669.0,478.9 669.5,480.0 670.0,479.2 670.5,476.9 671.0,473.1 671.5,467.8 672.0,461.1 672.6,453.1 673.1,443.9 673.6,433.7 674.1,422.5 674.6,410.5 675.1,398.0 675.6,385.0 676.1,371.7 676.6,358.3 677.1,345.0 677.6,332.0 678.2,319.5 678.7,307.5 679.2,296.3 679.7,286.1 680.2,276.9 680.7,268.9 681.2,262.2 681.7,256.9 682.2,253.1 682.7,250.8 683.2,250.0 683.8,251.1 684.3,254.3 684.8,259.5 685.3,266.8 685.8,275.8 686.3,286.6 686.8,298.8 687.3,312.2 687.8,326.7 688.4,341.8 688.9,357.4 689.4,373.1 689.9,388.7 690.4,403.8 690.9,418.3 691.4,431.7 691.9,443.9 692.4,454.7 693.0,463.7 693.5,471.0 694.0,476.2 694.5,479.4 695.0,480.5 695.5,479.8 696.0,477.6 696.5,474.0 697.0,469.1 697.5,462.8 698.0,455.4 698.5,446.7 699.0,437.1 699.5,426.6 700.0,415.3 700.5,403.3 701.0,390.9 701.5,378.2 702.0,365.2 702.5,352.3 703.0,339.6 703.5,327.2 704.0,315.2 704.5,303.9 705.0,293.4 705.5,283.8 706.0,275.1 706.5,267.7 707.0,261.4 707.5,256.5 708.0,252.9 708.5,250.7 709.0,250.0 709.5,251.1 710.0,254.3 710.5,259.5 711.0,266.8 711.5,275.8 712.0,286.6 712.5,298.8 713.0,312.2 713.5,326.7 714.0,341.8 714.5,357.4 715.0,373.1 715.5,388.7 716.0,403.8 716.5,418.3 717.0,431.7 717.5,443.9 718.0,454.7 718.5,463.7 719.0,471.0 719.5,476.2 720.0,479.4 720.5,480.5 721.0,479.8 721.5,477.6 722.0,474.0 722.5,469.1 723.0,462.8 723.5,455.4 724.0,446.7 724.5,437.1 725.0,426.6 725.5,415.3 726.0,403.3 726.5,390.9 727.0,378.2 727.5,365.2 728.0,352.3 728.5,339.6 729.0,327.2 729.5,315.2 730.0,303.9 730.5,293.4 731.0,283.8 731.5,275.1 732.0,267.7 732.5,261.4 733.0,256.5 733.5,252.9 734.0,250.7 734.5,250.0 735.0,251.1 735.5,254.3 736.0,259.5 736.5,266.8 737.0,275.8 737.5,286.6 738.0,298.8 738.5,312.2 739.0,326.7 739.5,341.8 740.0,357.4 740.5,373.1 741.0,388.7 741.5,403.8 742.0,418.3 742.5,431.7 743.0,443.9 743.5,454.7 744.0,463.7 744.5,471.0 745.0,476.2 745.5,479.4 746.0,480.5 746.5,479.8 747.0,477.6 747.5,474.0 748.0,469.1 748.5,462.8 749.0,455.4 749.5,446.7 750.0,437.1 750.5,426.6 751.0,415.3 751.5,403.3 752.0,390.9 752.5,378.2 753.0,365.2 753.5,352.3 754.0,339.6 754.5,327.2 755.0,315.2 755.5,303.9 756.0,293.4 756.5,283.8 757.0,275.1 757.5,267.7 758.0,261.4 758.5,256.5 759.0,252.9 759.5,250.7 760.0,250.0 760.5,251.1 761.0,254.3 761.5,259.5 762.0,266.8 762.5,275.8 763.0,286.6 763.5,298.8 764.0,312.2 764.5,326.7 765.0,341.8 765.5,357.4 766.0,373.1 766.5,388.7 767.0,403.8 767.5,418.3 768.0,431.7 768.5,443.9 769.0,454.7 769.5,463.7 770.0,471.0 770.5,476.2 771.0,479.4 771.5,480.5 772.0,479.8 772.5,477.6 773.0,474.0 773.5,469.0 774.0,462.8 774.5,455.2 775.0,446.6 775.5,436.9 776.0,426.3 776.5,415.0 777.0,403.0 777.5,390.5 778.0,377.7 778.5,364.8 779.0,351.8 779.5,339.0 780.0,326.5 780.5,314.5 781.0,303.2 781.5,292.6 782.0,282.9 782.5,274.3 783.0,266.7 783.5,260.5 784.0,255.5 784.5,251.9 785.0,249.7 785.5,249.0 786.0,250.0 786.5,252.9 787.0,257.8 787.5,264.4 788.0,272.8 788.5,282.7 789.0,294.0 789.5,306.5 790.0,320.0 790.5,334.2 791.0,349.0 791.5,364.0 792.0,379.0 792.5,393.8 793.0,408.0 793.5,421.5 794.0,434.0 794.5,445.3 795.0,455.2 795.5,463.6 796.0,470.2 796.5,475.1 797.0,478.0 797.5,479.0 798.0,478.3 798.5,476.1 799.0,472.6 799.5,467.7 800.0,461.4 800.5,454.0 801.0,445.5 801.5,435.9 802.0,425.4 802.5,414.2 803.0,402.3 803.5,390.0 804.0,377.3 804.5,364.5 805.0,351.7 805.5,339.0 806.0,326.7 806.5,314.8 807.0,303.6 807.5,293.1 808.0,283.5 808.5,275.0 809.0,267.6 809.5,261.3 810.0,256.4 810.5,252.9 811.0,250.7 811.5,250.0 812.0,251.0 812.5,253.9 813.0,258.8 813.5,265.4 814.0,273.8 814.5,283.7 815.0,295.0 815.5,307.5 816.0,321.0 816.5,335.2 817.0,350.0 817.5,365.0 818.0,380.0 818.5,394.8 819.0,409.0 819.5,422.5 820.0,435.0 820.5,446.3 821.0,456.2 821.5,464.6 822.0,471.2 822.5,476.1 823.0,479.0 823.5,480.0 824.0,479.2 824.5,476.9 825.0,473.1 825.5,467.8 826.0,461.1 826.5,453.1 827.0,443.9 827.5,433.7 828.0,422.5 828.5,410.5 829.0,398.0 829.5,385.0 830.0,371.7 830.5,358.3 831.0,345.0 831.5,332.0 832.0,319.5 832.5,307.5 833.0,296.3 833.5,286.1 834.0,276.9 834.5,268.9 835.0,262.2 835.5,256.9 836.0,253.1 836.5,250.8 837.0,250.0 837.5,251.1 838.0,254.3 838.5,259.5 839.0,266.7 839.5,275.8 840.0,286.5 840.5,298.7 841.0,312.1 841.5,326.5 842.0,341.6 842.5,357.2 843.0,372.8 843.5,388.4 844.0,403.5 844.5,417.9 845.0,431.3 845.5,443.5 846.0,454.2 846.5,463.3 847.0,470.5 847.5,475.7 848.0,478.9 848.5,480.0 849.0,479.3 849.5,477.1 850.0,473.5 850.5,468.6 851.0,462.4 851.6,454.9 852.1,446.3 852.6,436.7 853.1,426.2 853.6,414.9 854.1,403.0 854.6,390.6 855.1,377.9 855.6,365.0 856.1,352.1 856.6,339.4 857.2,327.0 857.7,315.1 858.2,303.8 858.7,293.3 859.2,283.7 859.7,275.1 860.2,267.6 860.7,261.4 861.2,256.5 861.7,252.9 862.2,250.7 862.8,250.0 863.3,251.1 863.8,254.3 864.3,259.5 864.8,266.7 865.3,275.8 865.8,286.5 866.3,298.7 866.8,312.1 867.3,326.5 867.9,341.6 868.4,357.2 868.9,372.8 869.4,388.4 869.9,403.5 870.4,417.9 870.9,431.3 871.4,443.5 871.9,454.2 872.5,463.3 873.0,470.5 873.5,475.7 874.0,478.9 874.5,480.0 875.0,479.3 875.5,477.1 876.0,473.5 876.5,468.6 877.0,462.4 877.6,454.9 878.1,446.3 878.6,436.7 879.1,426.2 879.6,414.9 880.1,403.0 880.6,390.6 881.1,377.9 881.6,365.0 882.1,352.1 882.6,339.4 883.2,327.0 883.7,315.1 884.2,303.8 884.7,293.3 885.2,283.7 885.7,275.1 886.2,267.6 886.7,261.4 887.2,256.5 887.7,252.9 888.2,250.7 888.8,250.0 889.3,251.2 889.8,254.7 890.3,260.4 890.8,268.3 891.3,278.1 891.8,289.7 892.3,302.8 892.8,317.2 893.4,332.6 893.9,348.6 894.4,365.0 894.9,381.4 895.4,397.4 895.9,412.8 896.4,427.2 896.9,440.3 897.4,451.9 898.0,461.7 898.5,469.6 899.0,475.3 899.5,478.8 900.0,480.0 900.5,479.3 901.0,477.3 901.5,474.0 902.0,469.4 902.5,463.5 903.0,456.6 903.5,448.5 904.0,439.4 904.5,429.5 905.0,418.9 905.5,407.6 906.0,395.8 906.5,383.6 907.0,371.2 907.5,358.8 908.0,346.4 908.5,334.2 909.0,322.4 909.5,311.1 910.0,300.5 910.5,290.6 911.0,281.5 911.5,273.4 912.0,266.5 912.5,260.6 913.0,256.0 913.5,252.7 914.0,250.7 914.5,250.0 915.0,251.1 915.5,254.3 916.0,259.5 916.5,266.7 917.0,275.8 917.5,286.5 918.0,298.7 918.5,312.1 919.0,326.5 919.5,341.6 920.0,357.2 920.5,372.8 921.0,388.4 921.5,403.5 922.0,417.9 922.5,431.3 923.0,443.5 923.5,454.2 924.0,463.3 924.5,470.5 925.0,475.7 925.5,478.9 926.0,480.0 926.5,479.3 927.0,477.1 927.5,473.5 928.0,468.6 928.5,462.4 929.0,454.9 929.5,446.3 930.0,436.7 930.5,426.2 931.0,414.9 931.5,403.0 932.0,390.6 932.5,377.9 933.0,365.0 933.5,352.1 934.0,339.4 934.5,327.0 935.0,315.1 935.5,303.8 936.0,293.3 936.5,283.7 937.0,275.1 937.5,267.6 938.0,261.4 938.5,256.5 939.0,252.9 939.5,250.7 940.0,250.0 940.5,251.0 941.0,253.9 941.5,258.8 942.0,265.5 942.5,273.9 943.0,283.8 943.5,295.2 944.0,307.8 944.5,321.3 945.0,335.6 945.5,350.4 946.0,365.5 946.5,380.6 947.0,395.4 947.5,409.7 948.0,423.2 948.5,435.8 949.0,447.2 949.5,457.1 950.0,465.5 950.5,472.2 951.0,477.1 951.5,480.0 952.0,481.0 952.5,480.3 953.0,478.1 953.5,474.5 954.0,469.5 954.5,463.2 955.1,455.7 955.6,447.0 956.1,437.3 956.6,426.7 957.1,415.3 957.6,403.3 958.1,390.8 958.6,378.0 959.1,365.0 959.6,352.0 960.1,339.2 960.7,326.7 961.2,314.7 961.7,303.3 962.2,292.7 962.7,283.0 963.2,274.3 963.7,266.8 964.2,260.5 964.7,255.5 965.2,251.9 965.7,249.7 966.2,249.0 966.8,250.1 967.3,253.3 967.8,258.6 968.3,265.9 968.8,275.0 969.3,285.8 969.8,298.1 970.3,311.6 970.8,326.2 971.4,341.4 971.9,357.1 972.4,372.9 972.9,388.6 973.4,403.8 973.9,418.4 974.4,431.9 974.9,444.2 975.4,455.0 976.0,464.1 976.5,471.4 977.0,476.7 977.5,479.9 978.0,481.0 978.5,480.3 979.0,478.3 979.5,474.9 980.0,470.2 980.5,464.3 981.0,457.2 981.5,449.1 982.0,439.9 982.5,429.9 983.0,419.1 983.5,407.6 984.0,395.7 984.5,383.3 985.0,370.8 985.5,358.2 986.0,345.7 986.5,333.3 987.0,321.4 987.5,309.9 988.0,299.1 988.5,289.1 989.0,279.9 989.5,271.8 990.0,264.7 990.5,258.8 991.0,254.1 991.5,250.7 992.0,248.7 992.5,248.0 993.0,249.1 993.5,252.3 994.0,257.7 994.5,265.0 995.0,274.2 995.5,285.1 996.0,297.5 996.5,311.2 997.0,325.8 997.5,341.2 998.0,357.0 998.5,373.0 999.0,388.8 999.5,404.2 1000.0,418.8 1000.5,432.5 1001.0,444.9 1001.5,455.8 1002.0,465.0 1002.5,472.3 1003.0,477.7 1003.5,480.9 1004.0,482.0 1004.5,481.3 1005.0,479.1 1005.5,475.5 1006.0,470.5 1006.5,464.1 1007.1,456.6 1007.6,447.9 1008.1,438.1 1008.6,427.5 1009.1,416.0 1009.6,404.0 1010.1,391.4 1010.6,378.5 1011.1,365.5 1011.6,352.5 1012.1,339.6 1012.7,327.0 1013.2,315.0 1013.7,303.5 1014.2,292.9 1014.7,283.1 1015.2,274.4 1015.7,266.9 1016.2,260.5 1016.7,255.5 1017.2,251.9 1017.7,249.7 1018.2,249.0 1018.8,250.1 1019.3,253.3 1019.8,258.6 1020.3,266.0 1020.8,275.1 1021.3,286.0 1021.8,298.3 1022.3,311.9 1022.8,326.5 1023.4,341.8 1023.9,357.5 1024.4,373.5 1024.9,389.2 1025.4,404.5 1025.9,419.1 1026.4,432.7 1026.9,445.0 1027.4,455.9 1028.0,465.0 1028.5,472.4 1029.0,477.7 1029.5,480.9 1030.0,482.0 1030.5,481.3 1031.0,479.2 1031.5,475.8 1032.0,471.1 1032.5,465.1 1033.0,457.9 1033.5,449.7 1034.0,440.4 1034.5,430.2 1035.0,419.3 1035.5,407.7 1036.0,395.6 1036.5,383.1 1037.0,370.4 1037.5,357.6 1038.0,344.9 1038.5,332.4 1039.0,320.3 1039.5,308.7 1040.0,297.8 1040.5,287.6 1041.0,278.3 1041.5,270.1 1042.0,262.9 1042.5,256.9 1043.0,252.2 1043.5,248.8 1044.0,246.7 1044.5,246.0 1045.0,247.0 1045.5,250.0 1046.0,255.0 1046.5,261.9 1047.0,270.5 1047.5,280.7 1048.0,292.4 1048.5,305.2 1049.0,319.2 1049.5,333.8 1050.0,349.0 1050.5,364.5 1051.0,380.0 1051.5,395.2 1052.0,409.8 1052.5,423.8 1053.0,436.6 1053.5,448.3 1054.0,458.5 1054.5,467.1 1055.0,474.0 1055.5,479.0 1056.0,482.0 1056.5,483.0 1057.0,482.2 1057.5,479.8 1058.0,475.9 1058.5,470.4 1059.0,463.6 1059.5,455.4 1060.0,446.0 1060.5,435.5 1061.0,424.0 1061.5,411.7 1062.0,398.8 1062.5,385.5 1063.0,371.9 1063.5,358.1 1064.0,344.5 1064.5,331.2 1065.0,318.3 1065.5,306.0 1066.0,294.5 1066.5,284.0 1067.0,274.6 1067.5,266.4 1068.0,259.6 1068.5,254.1 1069.0,250.2 1069.5,247.8 1070.0,247.0 1070.5,247.9 1071.0,250.7 1071.5,255.3 1072.0,261.7 1072.5,269.6 1073.0,279.1 1073.5,290.0 1074.0,302.0 1074.5,315.0 1075.0,328.9 1075.5,343.3 1076.0,358.1 1076.5,372.9 1077.0,387.7 1077.5,402.1 1078.0,416.0 1078.5,429.0 1079.0,441.0 1079.5,451.9 1080.0,461.4 1080.5,469.3 1081.0,475.7 1081.5,480.3 1082.0,483.1 1082.5,484.0 1083.0,483.2 1083.5,480.8 1084.0,476.8 1084.5,471.3 1085.0,464.3 1085.6,456.0 1086.1,446.5 1086.6,435.9 1087.1,424.2 1087.6,411.8 1088.1,398.8 1088.6,385.3 1089.1,371.4 1089.6,357.6 1090.1,343.7 1090.6,330.2 1091.2,317.2 1091.7,304.8 1092.2,293.1 1092.7,282.5 1093.2,273.0 1093.7,264.7 1094.2,257.7 1094.7,252.2 1095.2,248.2 1095.7,245.8 1096.2,245.0 1096.8,246.1 1097.3,249.4 1097.8,254.9 1098.3,262.4 1098.8,271.9 1099.4,283.0 1099.9,295.7 1100.4,309.7 1100.9,324.6 1101.4,340.4 1102.0,356.6 1102.5,372.9 1103.0,389.1 1103.5,404.9 1104.0,419.8 1104.6,433.8 1105.1,446.5 1105.6,457.6 1106.1,467.1 1106.6,474.6 1107.2,480.1 1107.7,483.4 1108.2,484.5 1108.7,483.7 1109.2,481.5 1109.7,477.8 1110.2,472.6 1110.7,466.1 1111.2,458.3 1111.7,449.4 1112.2,439.4 1112.7,428.4 1113.2,416.6 1113.7,404.2 1114.2,391.3 1114.7,378.0 1115.2,364.6 1115.7,351.2 1116.2,337.9 1116.7,325.0 1117.2,312.6 1117.7,300.8 1118.2,289.8 1118.7,279.8 1119.2,270.9 1119.7,263.1 1120.2,256.6 1120.7,251.4 1121.2,247.7 1121.7,245.5 1122.2,244.7 1122.7,245.9 1123.2,249.6 1123.7,255.6 1124.3,263.9 1124.8,274.2 1125.3,286.3 1125.8,300.1 1126.3,315.2 1126.8,331.4 1127.3,348.2 1127.8,365.4 1128.4,382.5 1128.9,399.3 1129.4,415.5 1129.9,430.6 1130.4,444.4 1130.9,456.5 1131.4,466.8 1132.0,475.1 1132.5,481.1 1133.0,484.8 1133.5,486.0 1134.0,485.2 1134.5,482.9 1135.0,479.2 1135.5,473.9 1136.0,467.3 1136.5,459.4 1137.0,450.3 1137.5,440.1 1138.0,428.9 1138.5,416.9 1139.0,404.3 1139.5,391.1 1140.0,377.7 1140.5,364.0 1141.0,350.3 1141.5,336.9 1142.0,323.7 1142.5,311.1 1143.0,299.1 1143.5,287.9 1144.0,277.7 1144.5,268.6 1145.0,260.7 1145.5,254.1 1146.0,248.8 1146.5,245.1 1147.0,242.8 1147.5,242.0 1148.0,243.2 1148.5,246.9 1149.1,253.0 1149.6,261.4 1150.1,271.8 1150.6,284.1 1151.1,298.0 1151.6,313.3 1152.2,329.6 1152.7,346.6 1153.2,364.0 1153.7,381.4 1154.2,398.4 1154.8,414.7 1155.3,430.0 1155.8,443.9 1156.3,456.2 1156.8,466.6 1157.3,475.0 1157.9,481.1 1158.4,484.8 1158.9,486.0 1159.4,485.2 1159.9,482.7 1160.4,478.6 1160.9,473.0 1161.4,465.9 1161.9,457.5 1162.4,447.7 1162.9,436.9 1163.4,425.0 1163.9,412.3 1164.4,399.0 1164.9,385.2 1165.4,371.1 1166.0,356.9 1166.5,342.8 1167.0,329.0 1167.5,315.7 1168.0,303.0 1168.5,291.1 1169.0,280.3 1169.5,270.5 1170.0,262.1 1170.5,255.0 1171.0,249.4 1171.5,245.3 1172.0,242.8 1172.5,242.0 1173.0,243.2 1173.5,246.6 1174.0,252.2 1174.5,260.0 1175.0,269.7 1175.5,281.2 1176.0,294.3 1176.5,308.7 1177.0,324.1 1177.5,340.4 1178.0,357.1 1178.5,373.9 1179.0,390.6 1179.5,406.9 1180.0,422.3 1180.5,436.7 1181.0,449.8 1181.5,461.3 1182.0,471.0 1182.5,478.8 1183.0,484.4 1183.5,487.8 1184.0,489.0 1184.5,488.2 1185.0,485.6 1185.5,481.5 1186.0,475.7 1186.6,468.5 1187.1,459.8 1187.6,449.9 1188.1,438.7 1188.6,426.6 1189.1,413.7 1189.6,400.0 1190.1,385.9 1190.6,371.5 1191.2,357.0 1191.7,342.6 1192.2,328.5 1192.7,314.8 1193.2,301.9 1193.7,289.8 1194.2,278.6 1194.7,268.7 1195.2,260.0 1195.8,252.8 1196.3,247.0 1196.8,242.9 1197.3,240.3 1197.8,239.5 1198.3,240.7 1198.8,244.1 1199.3,249.8 1199.8,257.7 1200.3,267.5 1200.9,279.1 1201.4,292.3 1201.9,306.9 1202.4,322.5 1202.9,338.9 1203.4,355.7 1203.9,372.8 1204.4,389.6 1204.9,406.0 1205.4,421.6 1205.9,436.2 1206.4,449.4 1207.0,461.0 1207.5,470.8 1208.0,478.7 1208.5,484.4 1209.0,487.8 1209.5,489.0 1210.0,488.2 1210.5,485.7 1211.0,481.5 1211.5,475.8 1212.0,468.6 1212.5,459.9 1213.0,450.0 1213.5,438.9 1214.0,426.9 1214.5,414.0 1215.0,400.4 1215.5,386.3 1216.0,372.0 1216.5,357.5 1217.0,343.2 1217.5,329.1 1218.0,315.5 1218.5,302.6 1219.0,290.6 1219.5,279.5 1220.0,269.6 1220.5,260.9 1221.0,253.7 1221.5,248.0 1222.0,243.8 1222.5,241.3 1223.0,240.5 1223.5,241.8 1224.0,245.6 1224.6,251.8 1225.1,260.4 1225.6,271.1 1226.1,283.7 1226.6,298.0 1227.1,313.7 1227.7,330.5 1228.2,347.9 1228.7,365.8 1229.2,383.6 1229.7,401.0 1230.3,417.8 1230.8,433.5 1231.3,447.8 1231.8,460.4 1232.3,471.1 1232.8,479.7 1233.4,485.9 1233.9,489.7 1234.4,491.0 1234.9,490.1 1235.4,487.3 1235.9,482.7 1236.5,476.5 1237.0,468.5 1237.5,459.1 1238.0,448.2 1238.5,436.1 1239.0,423.0 1239.6,409.0 1240.1,394.4 1240.6,379.3 1241.1,364.0 1241.6,348.7 1242.1,333.6 1242.6,319.0 1243.2,305.0 1243.7,291.9 1244.2,279.8 1244.7,268.9 1245.2,259.5 1245.7,251.5 1246.3,245.3 1246.8,240.7 1247.3,237.9 1247.8,237.0 1248.3,238.3 1248.8,242.1 1249.3,248.4 1249.8,257.1 1250.3,267.9 1250.9,280.7 1251.4,295.1 1251.9,311.0 1252.4,327.9 1252.9,345.5 1253.4,363.5 1253.9,381.5 1254.4,399.1 1254.9,416.0 1255.4,431.9 1255.9,446.3 1256.5,459.1 1257.0,469.9 1257.5,478.6 1258.0,484.9 1258.5,488.7 1259.0,490.0 1259.5,489.1 1260.0,486.3 1260.5,481.8 1261.0,475.5" fill="none" stroke="#e2e2e2" stroke-width="1" shape-rendering="crispEdges"/>
<path d=" M185.5,143.5 L186.5,143.5 M186.5,141.5 L194,141.5 M194,142.5 L232,142.5 M232,143.5 L240,143.5 M240,142.5 L250,142.5 M250,143.5 L283,143.5 M283,144.5 L297,144.5 M297,143.5 L340,143.5 M340,144.5 L350,144.5 M350,142.5 L387.8,142.5 M388,142 L388,438.5 M387.5,438.5 L646.5,438.5 L646.5,390 M647.5,390 L647.5,269 M648.5,269 L648.5,208 M649.5,208 L649.5,176 M650.5,176 L650.5,158 M651.5,158 L651.5,149 L652.5,146 L654,143.5 L655.5,141.5 M655,141.5 L710,141.5 M710,142.5 L722,142.5 M722,142.5 L790,142.5 M790,142.5 L912,142.5 M914,142.5 L925,142.5 M925,141.5 L950,141.5 M950,141.5 L960,141.5 M960,142.5 L982,142.5 M982,141.5 L993,141.5 M993,142.5 L1021,142.5 M1021,143.5 L1041,143.5 M1041,142.5 L1047,142.5 M1047,143.5 L1068,143.5 M1068,142.5 L1082,142.5 M1082,143.5 L1093,143.5 M1093,142.5 L1126,142.5 M1126,141.5 L1137,141.5 M1137,142.5 L1175,142.5 M1175,142.5 L1214,142.5 M1214,141.5 L1230,141.5 M1230,142.5 L1240,142.5 M1240,141.5 L1250,141.5 M1250,142.5 L1261,142.5 M912.5,142 L912.5,162.5" fill="none" stroke="#eaae72" stroke-width="1" shape-rendering="crispEdges"/>
<line x1="388" y1="143" x2="388" y2="438" stroke="#a07a50" stroke-width="2"/>
</g>
</svg>
<svg style="left:203px;top:623px;" width="12" height="23" viewBox="0 0 12 23"><rect x="0.8" y="0.7" width="10.6" height="10.4" rx="1.6" fill="none" stroke="#9a9a00" stroke-width="1.3"/><rect x="0.8" y="12" width="10.6" height="10.4" rx="1.6" fill="none" stroke="#9a9a00" stroke-width="1.3"/><path d="M3,9.8 L6,3 L9,9.8 M4.2,7.3 L7.8,7.3" fill="none" stroke="#b4b400" stroke-width="1.4"/><path d="M3.5,14.3 L7.5,14.3 Q9,14.3 9,16 Q9,17.5 7.5,17.5 L3.5,17.5 M3.5,17.5 L7.8,17.5 Q9.3,17.5 9.3,19.2 Q9.3,20.8 7.8,20.8 L3.5,20.8 Z M3.5,14.3 L3.5,20.8" fill="none" stroke="#b4b400" stroke-width="1.5"/></svg>
<svg style="left:166px;top:417px;" width="9" height="14" viewBox="0 0 9 14"><path d="M1.5,3.8 L5.5,1 L7.6,1 L7.6,12.8 L5.2,12.8 L5.2,4.5 L1.5,6Z" fill="#fff"/></svg>
<svg style="left:176px;top:420px;" width="8" height="9" viewBox="0 0 8 9"><path d="M0,2.5 L3,2.5 L3,0 L7.5,4.5 L3,9 L3,6.5 L0,6.5Z" fill="#fff"/></svg>
<div class="t" style="left:166.0px;top:431.6px;font-size:15px;color:#f4c080;font-weight:bold">2</div>
<svg style="left:176px;top:434px;" width="8" height="9" viewBox="0 0 8 9"><path d="M0,2.5 L3,2.5 L3,0 L7.5,4.5 L3,9 L3,6.5 L0,6.5Z" fill="#f4c080"/></svg>
<div class="a" style="left:1025px;top:621px;width:220px;height:20px;background:linear-gradient(#d0d6de,#c4cad4);border:1px solid #8eb0d8"></div>
<div class="t" style="left:1055.6px;top:625.0px;font-size:12.3px;color:#141420;transform:scaleX(0.9084);transform-origin:0 0;">Сделать скриншот экрана</div>
<svg style="left:1067px;top:627px;" width="13" height="20" viewBox="0 0 13 20"><path d="M0.5,0.5 L0.5,15 L4,11.5 L6.5,17.5 L9,16.5 L6.5,10.5 L11,10.5 Z" fill="#fff" stroke="#000" stroke-width="1"/></svg>
<div class="a" style="left:1261px;top:64px;width:17px;height:582px;background:linear-gradient(90deg,#e6e6e6,#f2f2f2 3px,#f0f0f0);"></div>
<svg style="left:1267px;top:71px;" width="7" height="5" viewBox="0 0 7 5"><path d="M0,4.5 L3.5,0 L7,4.5Z" fill="#404040"/></svg>
<svg style="left:1267px;top:636px;" width="7" height="5" viewBox="0 0 7 5"><path d="M0,0.5 L3.5,4.5 L7,0.5Z" fill="#404040"/></svg>
<div class="a" style="left:1262px;top:354px;width:14px;height:14px;background:linear-gradient(90deg,#f6f6f6,#f0f0f0 40%,#d6d6d6);border:1px solid #9a9a9a;border-radius:2px"></div>
<div class="a" style="left:163px;top:646px;width:1098px;height:16px;background:linear-gradient(#e8e8e8,#f2f2f2 3px,#f0f0f0);"></div>
<div class="a" style="left:1261px;top:646px;width:17px;height:16px;background:#f0f0f0;"></div>
<svg style="left:168.5px;top:651.5px;" width="5" height="6" viewBox="0 0 5 6"><path d="M4,0 L0,3 L4,6Z" fill="#505050"/></svg>
<svg style="left:1252px;top:651px;" width="5" height="6" viewBox="0 0 5 6"><path d="M0,0 L4,3 L0,6Z" fill="#505050"/></svg>
<div class="a" style="left:181px;top:647px;width:14px;height:14px;background:linear-gradient(#f8f8f8,#ececec 50%,#d4d4d4);border:1px solid #9a9a9a;border-radius:2px"></div>
<div class="a" style="left:0px;top:662px;width:1278px;height:2px;background:linear-gradient(#c8c8c8,#a8a8a8);"></div>
<div class="a" style="left:0px;top:664px;width:1278px;height:17px;background:#f0eded;"></div>
<div class="a" style="left:971px;top:665px;width:1px;height:16px;background:#c8c4c4;"></div>
<div class="t" style="left:2.5px;top:667.8px;font-size:12.3px;color:#141420;transform:scaleX(0.8764);transform-origin:0 0;">Готов...</div>
<div class="t" style="left:975.4px;top:667.8px;font-size:12.3px;color:#141420;transform:scaleX(0.8586);transform-origin:0 0;">Полное время файла: 000:00:26.118.288</div>
<div class="a" style="left:0px;top:681px;width:1280px;height:2px;background:linear-gradient(#8a8a8a,#b0b0b0);"></div>
<div class="a" style="left:1278px;top:20px;width:1px;height:643px;background:#ffffff;"></div>
<div class="a" style="left:1279px;top:0px;width:1px;height:663px;background:#000;"></div>
<div class="a" style="left:0px;top:683px;width:1280px;height:36px;background:linear-gradient(90deg,#a6a6a6 0px,#b0b0b0 50px,#b8b8b8 76px,#d8d8d8 92px,#e0e0e0 200px,#e4e4e4 500px,#e4e4e4 790px,#b2b2b2 832px,#aaaaaa 1000px,#a8a8a8 1265px);"></div>
<div class="a" style="left:0px;top:682px;width:1280px;height:1px;background:#f2f2f2;"></div>
<div class="a" style="left:0px;top:683px;width:1280px;height:1px;background:#c8c8c8;"></div>
<div class="a" style="left:0px;top:719px;width:1280px;height:1px;background:#101010;"></div>
<div class="a" style="left:1266px;top:684px;width:14px;height:34px;background:linear-gradient(90deg,#c8c8c8,#e8e8e8 50%,#d0d0d0);border-left:1px solid #8a8a8a"></div>
<svg width="1280" height="720" viewBox="0 0 1280 720"><defs><radialGradient id="orb" cx="50%" cy="40%" r="60%"><stop offset="0" stop-color="#6ab0e0"/><stop offset="0.55" stop-color="#1a5a98"/><stop offset="0.85" stop-color="#0a3a6a"/><stop offset="1" stop-color="#20a0e8"/></radialGradient><radialGradient id="fire" cx="50%" cy="50%" r="50%"><stop offset="0" stop-color="#fff0a0"/><stop offset="0.45" stop-color="#ffa020"/><stop offset="0.85" stop-color="#e04a10"/><stop offset="1" stop-color="#802000"/></radialGradient><linearGradient id="btn" x1="0" y1="0" x2="0" y2="1"><stop offset="0" stop-color="#f8f8f8"/><stop offset="1" stop-color="#e4e4e4"/></linearGradient><radialGradient id="gl" cx="40%" cy="30%" r="70%"><stop offset="0" stop-color="#50a0f8"/><stop offset="0.6" stop-color="#2a50d8"/><stop offset="1" stop-color="#6a30b8"/></radialGradient><radialGradient id="ff" cx="60%" cy="30%" r="70%"><stop offset="0" stop-color="#ffe040"/><stop offset="0.45" stop-color="#ff9020"/><stop offset="0.8" stop-color="#f0302a"/><stop offset="1" stop-color="#d01a6a"/></radialGradient></defs><defs><linearGradient id="orb2" x1="0" y1="0" x2="0" y2="1"><stop offset="0" stop-color="#b8d0e0"/><stop offset="0.45" stop-color="#5a8ab0"/><stop offset="0.5" stop-color="#0a4a88"/><stop offset="0.8" stop-color="#1a80c8"/><stop offset="1" stop-color="#10d0f8"/></linearGradient></defs><circle cx="25.2" cy="700" r="16.8" fill="url(#orb2)" stroke="#2a5a88" stroke-width="0.7"/><path d="M17.5,691 Q22,689 27,691 L25.5,699 Q21,697.5 16,699.5Z" fill="#e85a20"/><path d="M27,692 Q31.5,694 36.5,692.5 L35,701 Q30,702.5 25.8,700.5Z" fill="#8ac040"/><path d="M15.5,700 Q20,698 24.5,700 L23,708 Q18.5,706.5 14,708Z" fill="#3a9ae0"/><path d="M25,701.5 Q29.5,703 34,701.5 L32.5,710 Q28,711.5 23.5,709.5Z" fill="#f8c020"/><rect x="55.0" y="687.0" width="1.3" height="1.3" fill="#3a3a3a"/><rect x="55.0" y="690.8" width="1.3" height="1.3" fill="#3a3a3a"/><rect x="55.0" y="694.5" width="1.3" height="1.3" fill="#3a3a3a"/><rect x="55.0" y="698.2" width="1.3" height="1.3" fill="#3a3a3a"/><rect x="55.0" y="702.0" width="1.3" height="1.3" fill="#3a3a3a"/><rect x="55.0" y="705.8" width="1.3" height="1.3" fill="#3a3a3a"/><rect x="55.0" y="709.5" width="1.3" height="1.3" fill="#3a3a3a"/><rect x="55.0" y="713.2" width="1.3" height="1.3" fill="#3a3a3a"/><rect x="57.9" y="687.0" width="1.3" height="1.3" fill="#3a3a3a"/><rect x="57.9" y="690.8" width="1.3" height="1.3" fill="#3a3a3a"/><rect x="57.9" y="694.5" width="1.3" height="1.3" fill="#3a3a3a"/><rect x="57.9" y="698.2" width="1.3" height="1.3" fill="#3a3a3a"/><rect x="57.9" y="702.0" width="1.3" height="1.3" fill="#3a3a3a"/><rect x="57.9" y="705.8" width="1.3" height="1.3" fill="#3a3a3a"/><rect x="57.9" y="709.5" width="1.3" height="1.3" fill="#3a3a3a"/><rect x="57.9" y="713.2" width="1.3" height="1.3" fill="#3a3a3a"/><rect x="60.8" y="687.0" width="1.3" height="1.3" fill="#3a3a3a"/><rect x="60.8" y="690.8" width="1.3" height="1.3" fill="#3a3a3a"/><rect x="60.8" y="694.5" width="1.3" height="1.3" fill="#3a3a3a"/><rect x="60.8" y="698.2" width="1.3" height="1.3" fill="#3a3a3a"/><rect x="60.8" y="702.0" width="1.3" height="1.3" fill="#3a3a3a"/><rect x="60.8" y="705.8" width="1.3" height="1.3" fill="#3a3a3a"/><rect x="60.8" y="709.5" width="1.3" height="1.3" fill="#3a3a3a"/><rect x="60.8" y="713.2" width="1.3" height="1.3" fill="#3a3a3a"/><circle cx="99.5" cy="700.5" r="11.5" fill="#30a8e8"/><circle cx="99.5" cy="700.5" r="9" fill="#60c8f8"/><circle cx="100" cy="699" r="5.2" fill="#e2e2e2"/><rect x="92" y="698.5" width="15" height="3.2" fill="#30a0e0"/><rect x="104" y="701.7" width="8" height="3.5" fill="#e2e2e2"/><path d="M87,712 Q83,703 94,692 Q106,681 111.5,687 Q113,691 108,696" fill="none" stroke="#f8c020" stroke-width="2.4"/><circle cx="156.2" cy="700" r="13.6" fill="#2a9a4a"/><path d="M156.2,700 L144.4,693.2 A13.6,13.6 0 0 1 168,693.2Z" fill="#e0382a"/><path d="M156.2,700 L168,693.2 A13.6,13.6 0 0 1 156.2,713.6Z" fill="#f8c020"/><circle cx="156.2" cy="700" r="6" fill="#fff"/><circle cx="156.2" cy="700" r="4.6" fill="#3a80e8"/><path d="M226,692 A11,11 0 1 0 227,708" fill="none" stroke="#e02a2a" stroke-width="6"/><path d="M211,702 L217.5,689" stroke="#2a70c8" stroke-width="2.6"/><path d="M207,699 L214,703 L211,706 L205,702Z" fill="#2a70c8"/><path d="M200,709 L205.5,701 L212,705 L208,713 Q203,713 200,709Z" fill="#f4d8a8" stroke="#c8a878" stroke-width="0.6"/><circle cx="272.3" cy="700" r="14.4" fill="#3a3a3a"/><circle cx="272.3" cy="700" r="13.2" fill="#e4e4e4"/><circle cx="272.3" cy="700" r="11.6" fill="url(#fire)"/><rect x="270.3" y="698" width="4" height="9" fill="#111"/><circle cx="272.3" cy="694" r="2.3" fill="#111"/><rect x="268.5" y="705" width="7.5" height="2.2" fill="#111"/><rect x="303.0" y="682.8" width="55" height="34.5" rx="2" fill="url(#btn)" stroke="#9a9a9a"/><rect x="361.0" y="682.8" width="55" height="34.5" rx="2" fill="url(#btn)" stroke="#9a9a9a"/><rect x="419.3" y="682.8" width="55" height="34.5" rx="2" fill="url(#btn)" stroke="#9a9a9a"/><circle cx="331" cy="700.5" r="14" fill="url(#ff)"/><circle cx="332" cy="699.5" r="8.5" fill="url(#gl)"/><path d="M319,694 Q323,686 331,687 Q326,690 325,696 Q327,702 334,703 Q338,703 340,700 Q339,708 331,709 Q322,709 320,701Z" fill="#ff7a20"/><path d="M336,685 Q347,690 345,703 Q343,694 337,691Z" fill="#ffd030"/><path d="M376,705 L382,699 L402,699 L402.5,705Z" fill="#e8e8e8" stroke="#888" stroke-width="0.7"/><path d="M376,705 L402.5,705 L402,710 Q389,712 376,710Z" fill="#a0a0a0" stroke="#666" stroke-width="0.7"/><rect x="380" y="707" width="10" height="1.5" fill="#444"/><rect x="431.5" y="686.5" width="29" height="28" rx="2" fill="#4a4a4a"/><rect x="434" y="688.5" width="24" height="18" fill="#0a3a8a"/><path d="M435,696 Q438,686 441,692 Q444,699 447,692 Q450,686 453,692 Q455,697 457.5,691" fill="none" stroke="#20e040" stroke-width="1.3"/><path d="M435,704 L438,704 L438,699 L443,699 L443,704 L447,704 L447,699 L452,699 L452,704 L457,704" fill="none" stroke="#20e040" stroke-width="1.3"/><rect x="434" y="708" width="24" height="4" fill="#2a2a2a"/><path d="M435,710 L457,710" stroke="#999" stroke-width="1.2" stroke-dasharray="1.5 1.5"/><rect x="838.5" y="686.5" width="1.3" height="1.3" fill="#3a3a3a"/><rect x="838.5" y="690.1" width="1.3" height="1.3" fill="#3a3a3a"/><rect x="838.5" y="693.7" width="1.3" height="1.3" fill="#3a3a3a"/><rect x="838.5" y="697.3" width="1.3" height="1.3" fill="#3a3a3a"/><rect x="838.5" y="700.9" width="1.3" height="1.3" fill="#3a3a3a"/><rect x="838.5" y="704.5" width="1.3" height="1.3" fill="#3a3a3a"/><rect x="838.5" y="708.1" width="1.3" height="1.3" fill="#3a3a3a"/><rect x="838.5" y="711.7" width="1.3" height="1.3" fill="#3a3a3a"/><rect x="840.7" y="686.5" width="1.3" height="1.3" fill="#3a3a3a"/><rect x="840.7" y="690.1" width="1.3" height="1.3" fill="#3a3a3a"/><rect x="840.7" y="693.7" width="1.3" height="1.3" fill="#3a3a3a"/><rect x="840.7" y="697.3" width="1.3" height="1.3" fill="#3a3a3a"/><rect x="840.7" y="700.9" width="1.3" height="1.3" fill="#3a3a3a"/><rect x="840.7" y="704.5" width="1.3" height="1.3" fill="#3a3a3a"/><rect x="840.7" y="708.1" width="1.3" height="1.3" fill="#3a3a3a"/><rect x="840.7" y="711.7" width="1.3" height="1.3" fill="#3a3a3a"/><rect x="842.9" y="686.5" width="1.3" height="1.3" fill="#3a3a3a"/><rect x="842.9" y="690.1" width="1.3" height="1.3" fill="#3a3a3a"/><rect x="842.9" y="693.7" width="1.3" height="1.3" fill="#3a3a3a"/><rect x="842.9" y="697.3" width="1.3" height="1.3" fill="#3a3a3a"/><rect x="842.9" y="700.9" width="1.3" height="1.3" fill="#3a3a3a"/><rect x="842.9" y="704.5" width="1.3" height="1.3" fill="#3a3a3a"/><rect x="842.9" y="708.1" width="1.3" height="1.3" fill="#3a3a3a"/><rect x="842.9" y="711.7" width="1.3" height="1.3" fill="#3a3a3a"/><rect x="880.5" y="694.5" width="13" height="13" rx="4" fill="#fff" stroke="#1a9090" stroke-width="2"/><text x="886.5" y="704.5" font-family="Liberation Sans" font-weight="bold" font-size="9" fill="#1a9090" text-anchor="middle">e</text><circle cx="892" cy="705" r="3" fill="#2a90e0"/><rect x="902.5" y="694" width="9" height="10" fill="#8a4aa8"/><text x="907" y="702.5" font-family="Liberation Sans" font-weight="bold" font-size="8" fill="#fff" text-anchor="middle">N</text><path d="M910,696 L916,706 M916,696 L910,706" stroke="#6a4a8a" stroke-width="1.2"/><circle cx="910" cy="706" r="2" fill="none" stroke="#8a6aa8"/><circle cx="916" cy="706" r="2" fill="none" stroke="#8a6aa8"/><rect x="925" y="694" width="15" height="14.8" fill="#7a0000"/><text x="932.5" y="705.5" font-family="Liberation Sans" font-size="10" fill="#f0e0e0" text-anchor="middle">En</text><circle cx="955" cy="701.5" r="5.6" fill="#d83030"/><path d="M953,699.5 L957,703.5 M957,699.5 L953,703.5" stroke="#fff" stroke-width="1.2"/><rect x="970.5" y="694" width="14.5" height="14.5" rx="1.5" fill="#f07020" stroke="#c05010" stroke-width="0.7"/><path d="M973,705 L982,705 M974,702.5 L981,702.5 M977,701 Q975,698 978,696" fill="none" stroke="#fff" stroke-width="1"/><rect x="993" y="694" width="5" height="5" fill="#909090"/><rect x="992.5" y="699" width="6" height="9" rx="1" fill="#5a5a5a"/><circle cx="1003" cy="704" r="4.5" fill="#30a030"/><path d="M1000.5,704 L1002.5,706 L1005.5,701.5" fill="none" stroke="#fff" stroke-width="1.2"/><rect x="1016" y="695" width="12" height="12" fill="none" stroke="#20a0f0" stroke-width="1.8" stroke-dasharray="3 1.2"/><path d="M1026,706 L1030,706 M1028,704 L1028,708" stroke="#20a0f0" stroke-width="1.3"/><path d="M1038,695 L1038,708.5" stroke="#f4f4f4" stroke-width="1.8"/><path d="M1039,695.5 L1046,695.5 L1046,697 L1052,698 L1049,702 L1039,702Z" fill="#f4f4f4" stroke="#777" stroke-width="0.6"/><rect x="1060" y="696" width="10" height="12.5" rx="1" fill="#f0f0f0" stroke="#555" stroke-width="0.9"/><path d="M1066,699 L1073,699 L1073,705 L1066,705Z M1068,696 L1068,699 M1071,696 L1071,699 M1069.5,705 L1069.5,708" fill="#f8f8f8" stroke="#333" stroke-width="0.9"/><rect x="1082" y="694" width="15.5" height="15" fill="#1a5ab8"/><path d="M1089.8,695.5 L1089.8,707.5 M1084.5,698.5 L1095,704.5 M1084.5,704.5 L1095,698.5" stroke="#fff" stroke-width="1.3"/><rect x="1105.5" y="694" width="12.5" height="14" rx="2" fill="#1a7ad8"/><circle cx="1111.7" cy="701" r="4.8" fill="#fff"/><path d="M1108,701 L1115.5,701" stroke="#1a7ad8" stroke-width="1.5"/><path d="M1107.5,701 L1109.5,699 L1109.5,703Z M1116,701 L1114,699 L1114,703Z" fill="#1a7ad8"/><circle cx="1134.5" cy="697.5" r="3.5" fill="#f8c020"/><circle cx="1130" cy="701.5" r="3.5" fill="#f8c020"/><circle cx="1139" cy="701.5" r="3.5" fill="#f8c020"/><circle cx="1134.5" cy="705.5" r="3.5" fill="#f8c020"/><circle cx="1134.5" cy="701.5" r="2.2" fill="#fff"/><circle cx="1134.5" cy="695" r="1.6" fill="#e01010"/><circle cx="1128" cy="700" r="1.6" fill="#e01010"/><circle cx="1141" cy="700" r="1.6" fill="#e01010"/><circle cx="1134.5" cy="708" r="1.6" fill="#e01010"/><path d="M1150,699 L1153,699 L1157,695.5 L1157,707.5 L1153,704 L1150,704Z" fill="#f0f0f0" stroke="#666" stroke-width="0.8"/><path d="M1159.5,698 Q1161.5,701.5 1159.5,705 M1162,696 Q1165.5,701.5 1162,707" fill="none" stroke="#f0f0f0" stroke-width="1.3"/><path d="M1172.5,706.5 L1172.5,705 M1175.5,706.5 L1175.5,703 M1178.5,706.5 L1178.5,701 M1181.5,706.5 L1181.5,698.5 M1184.5,706.5 L1184.5,696" stroke="#f4f4f4" stroke-width="2"/><path d="M1171,707 L1187,707" stroke="#777" stroke-width="0.8"/></svg>
<div class="t" style="left:851.8px;top:693.3px;font-size:10.5px;color:#f0f0f0;">EN</div>
<div class="t" style="left:1216.5px;top:689.4px;font-size:10.3px;color:#f8f8f8;text-shadow:0 0 2px #888">13:37</div>
<div class="t" style="left:1203.8px;top:705.5px;font-size:10.2px;color:#f8f8f8;text-shadow:0 0 2px #888">27.05.2019</div>
</body></html>
